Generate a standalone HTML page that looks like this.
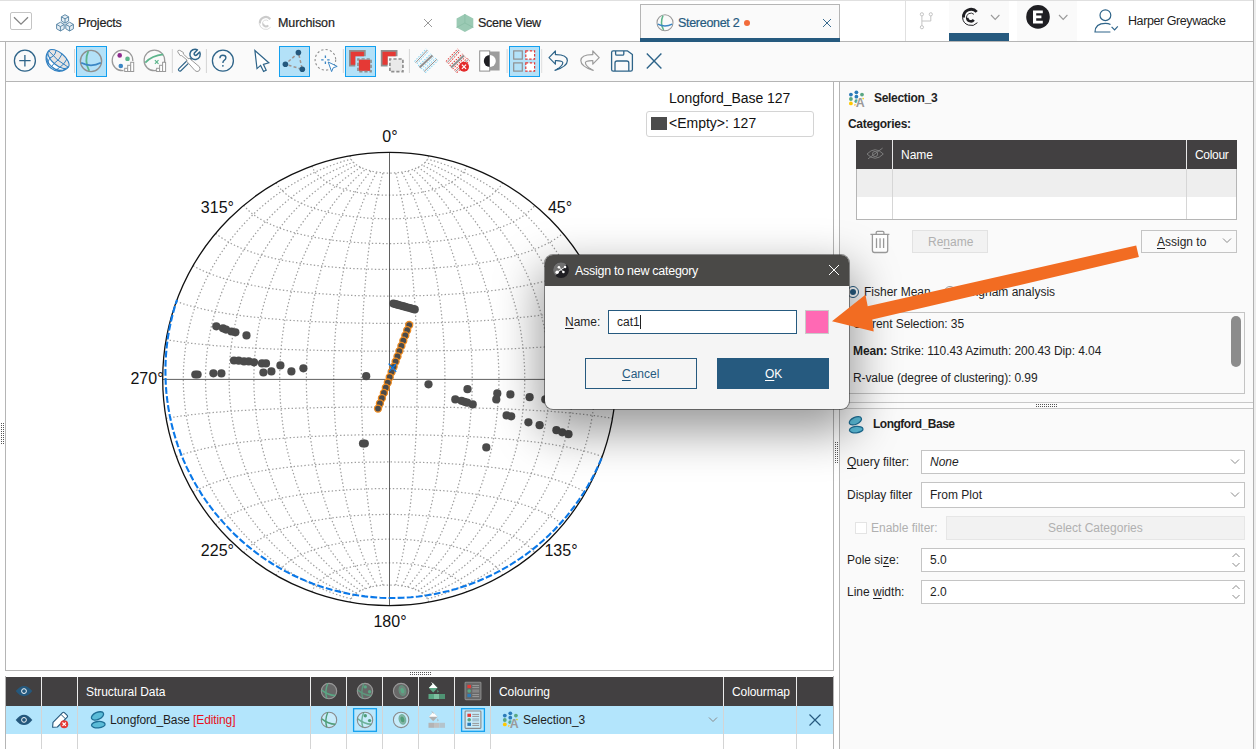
<!DOCTYPE html><html><head><meta charset='utf-8'><title>Stereonet</title><style>
*{box-sizing:border-box;margin:0;padding:0}
html,body{width:1256px;height:749px;overflow:hidden;background:#fff}
body{position:relative;font-family:"Liberation Sans",sans-serif;font-size:12px;color:#1f1f1f}
.a{position:absolute}
.t{position:absolute;white-space:pre;line-height:16px;height:16px}
.m{-webkit-text-stroke:0.22px currentColor}
.b{font-weight:bold}
svg{position:absolute;overflow:visible}
u{text-decoration:underline;text-underline-offset:2px}
</style></head><body>
<div class='a' style='left:0;top:0;width:1256px;height:1px;background:#e0e0e0'></div>
<div class='a' style='left:0;top:41px;width:1256px;height:1px;background:#b5b5b5'></div>
<div class='a' style='left:10px;top:12px;width:22px;height:18px;border:1px solid #c4c4c4;border-radius:2px;background:#fff'></div>
<svg style='left:10px;top:12px' width='22' height='18'><path d='M4 5.2 L11 12.2 L18 5.2' fill='none' stroke='#848484' stroke-width='1.3'/></svg>
<div class='t m' style='left:78px;top:15px;font-size:12.5px;letter-spacing:-0.2px'>Projects</div>
<div class='t m' style='left:278px;top:15px;font-size:12.5px;letter-spacing:-0.1px'>Murchison</div>
<div class='t m' style='left:478px;top:15px;font-size:12.5px;letter-spacing:-0.3px'>Scene View</div>
<div class='a' style='left:640px;top:4px;width:200px;height:38px;border:1px solid #b5b5b5;border-bottom:none;background:#fafafa'></div>
<div class='a' style='left:640px;top:38px;width:200px;height:4px;background:#265a7f'></div>
<div class='t m' style='left:678px;top:15px;font-size:12.5px;letter-spacing:-0.3px;color:#265a7f'>Stereonet 2</div>
<div class='a' style='left:744px;top:20px;width:6px;height:6px;border-radius:3px;background:#f26b3a'></div>
<svg style='left:423px;top:18px' width='10' height='10'><path d='M1 1 L9 9 M9 1 L1 9' stroke='#9a9a9a' stroke-width='1'/></svg>
<svg style='left:822px;top:18px' width='10' height='10'><path d='M1 1 L9 9 M9 1 L1 9' stroke='#3a6c90' stroke-width='1'/></svg>
<div class='a' style='left:905px;top:1px;width:1px;height:40px;background:#e0e0e0'></div>
<div class='a' style='left:949px;top:1px;width:60px;height:32px;background:#fafafa'></div>
<div class='a' style='left:949px;top:33px;width:60px;height:8px;background:#265a7f'></div>
<div class='a' style='left:1017px;top:1px;width:60px;height:40px;background:#fafafa'></div>
<div class='t' style='left:1128px;top:13px;font-size:12.5px;letter-spacing:-0.42px'>Harper Greywacke</div>
<div class='a' style='left:5px;top:42px;width:1251px;height:40px;border-left:1px solid #b5b5b5;border-bottom:1px solid #b5b5b5;background:#fafafa'></div>
<svg style='left:0;top:0' width='1256' height='749' viewBox='0 0 1256 749'><path d='M65.0 14.7 L68.6 16.8 L68.6 21.0 L65.0 23.1 L61.4 21.0 L61.4 16.8Z M65.0 18.9 L68.6 16.8 M65.0 18.9 L61.4 16.8 M65.0 18.9 L65.0 23.1' fill='#e6eef4' stroke='#4f7fa0' stroke-width='0.9' stroke-linejoin='round'/><path d='M60.4 22.2 L64.2 24.4 L64.2 28.8 L60.4 31.0 L56.6 28.8 L56.6 24.4Z M60.4 26.6 L64.2 24.4 M60.4 26.6 L56.6 24.4 M60.4 26.6 L60.4 31.0' fill='#e6eef4' stroke='#4f7fa0' stroke-width='0.9' stroke-linejoin='round'/><path d='M69.6 22.2 L73.4 24.4 L73.4 28.8 L69.6 31.0 L65.8 28.8 L65.8 24.4Z M69.6 26.6 L73.4 24.4 M69.6 26.6 L65.8 24.4 M69.6 26.6 L69.6 31.0' fill='#e6eef4' stroke='#4f7fa0' stroke-width='0.9' stroke-linejoin='round'/><path d='M270.3 19.2 A5.9 5.9 0 0 0 259.9 23.5' fill='none' stroke='#cbcbcb' stroke-width='2.2'/><path d='M259.3 23.6 A6.5 6.5 0 0 0 270.6 27.3' fill='none' stroke='#d2d2d2' stroke-width='0.8'/><path d='M268.2 20.9 A3.5 3.5 0 0 0 262.4 23.8' fill='none' stroke='#d2d2d2' stroke-width='0.8'/><path d='M263.0 23.6 A2.9 2.9 0 0 0 268.2 25.3' fill='none' stroke='#cbcbcb' stroke-width='2'/><path d='M464.9 14 L473.3 18.6 L473.3 27.4 L464.9 32 L456.6 27.4 L456.6 18.6 Z' fill='#9bcab4'/><path d='M464.9 14 V23 L473.3 27.4 M464.9 23 L456.6 27.4' fill='none' stroke='#8cc0a8' stroke-width='1'/><circle cx='665' cy='22.8' r='8' fill='none' stroke='#9a9a9a' stroke-width='1.1'/><path d='M663.0 15.6 Q659.7 22.8 663.6 30.0' fill='none' stroke='#5db58c' stroke-width='1.5'/><path d='M657.8 24.2 Q665.0 27.9 672.2 24.2' fill='none' stroke='#3b86c4' stroke-width='1.5'/><g fill='#fff' stroke='#c4c4c4' stroke-width='1'><path d='M921.9 15.5 V26 M930.8 15.5 V21 H921.9' fill='none'/><circle cx='921.9' cy='14.3' r='1.6'/><circle cx='930.8' cy='14.3' r='1.6'/><circle cx='921.9' cy='27.2' r='1.6'/></g><path d='M976.7 11.9 A7.6 7.6 0 0 0 963.5 17.7' fill='none' stroke='#1f1f23' stroke-width='2.9'/><path d='M962.6 17.7 A8.5 8.5 0 0 0 977.4 22.7' fill='none' stroke='#1f1f23' stroke-width='1'/><path d='M973.9 14.3 A4.5 4.5 0 0 0 966.4 18.0' fill='none' stroke='#1f1f23' stroke-width='0.9'/><path d='M967.2 17.7 A3.7 3.7 0 0 0 973.8 19.9' fill='none' stroke='#1f1f23' stroke-width='2.6'/><path d='M991 15 L995.2 19.4 L999.4 15' fill='none' stroke='#9a9a9a' stroke-width='1.1'/><circle cx='1038' cy='16.9' r='11.8' fill='#1f1f23'/><path d='M1033 10.4 H1042.8 V13.2 H1036.2 V15.6 H1041.4 V18.3 H1036.2 V20.8 H1042.8 V23.6 H1033 Z' fill='#fff'/><path d='M1059 15 L1063.2 19.4 L1067.4 15' fill='none' stroke='#9a9a9a' stroke-width='1.1'/><g fill='none' stroke='#2e6489' stroke-width='1.2'><circle cx='1105.4' cy='15.2' r='5.4'/><path d='M1110.5 24.6 Q1108.5 23.4 1105.4 23.4 Q1095.2 23.4 1095 32 H1110.4 M1111.6 26.8 L1114.6 29.8 L1117.8 26.4'/></g><g fill='none' stroke='#2e6489' stroke-width='1.3'><circle cx='24.9' cy='60.7' r='10.5'/><path d='M24.9 55 V66.4 M19.2 60.7 H30.6'/></g><g transform='translate(58.5 59) rotate(40)'><path d='M-12.8 0 A12.8 12 0 0 0 12.8 0' fill='#fff' stroke='#2f7fc1' stroke-width='1.1'/><ellipse cx='0' cy='0' rx='12.8' ry='6.2' fill='#e8e4e2' stroke='#2f7fc1' stroke-width='1.1'/><g fill='none' stroke='#2f7fc1' stroke-width='0.9'><path d='M-12.8 0 Q0 2.6 12.8 0'/><path d='M-7.4 -5 Q-4.4 0 -7.4 5 M-0.5 -6.2 Q1.5 0 -0.5 6.2 M6.4 -5.4 Q8 0 6.4 5.4'/><path d='M-11.8 3.4 A12.2 9 0 0 0 11.8 3.4 M-9.8 7 A10.6 6 0 0 0 9.8 7 M-7.4 5 Q-6.6 8.6 -4.6 11 M-0.5 6.2 V12 M6.4 5.4 Q5.8 9 4.2 11.2'/></g></g><path d='M74.5 49 V73' stroke='#d4d4d4' stroke-width='1'/><rect x='76.5' y='46.5' width='30' height='30' fill='#b3e1f8' stroke='#12a0f0' stroke-width='1'/><circle cx='91' cy='61' r='10.6' fill='none' stroke='#8f8f8f' stroke-width='1.4'/><path d='M88.3 51.2 Q84.0 61.0 89.2 70.8' fill='none' stroke='#5db58c' stroke-width='1.7999999999999998'/><path d='M81.2 62.8 Q91.0 67.8 100.8 62.8' fill='none' stroke='#3b86c4' stroke-width='1.7999999999999998'/><circle cx='122.5' cy='60.4' r='10.3' fill='none' stroke='#9a9a9a' stroke-width='1.3'/><circle cx='119.7' cy='55.4' r='2.3' fill='#8e2a8e'/><circle cx='127.5' cy='58.9' r='2.3' fill='#5db58c'/><circle cx='120.8' cy='66' r='2.3' fill='#3b86c4'/><rect x='123.5' y='61' width='12' height='12' fill='#fafafa'/><rect x='124.7' y='68.3' width='3' height='3.2' fill='#fff' stroke='#9a9a9a' stroke-width='1'/><rect x='127.7' y='65.3' width='3' height='6.2' fill='#fff' stroke='#9a9a9a' stroke-width='1'/><rect x='130.7' y='62.3' width='3' height='9.2' fill='#fff' stroke='#9a9a9a' stroke-width='1'/><circle cx='154.4' cy='60.4' r='10.3' fill='none' stroke='#9a9a9a' stroke-width='1.3'/><path d='M145.3 62.6 Q152 55.5 163.2 54.4' fill='none' stroke='#5db58c' stroke-width='1.7'/><path d='M154.9 60.2 L158.5 63.8 M158.5 60.2 L154.9 63.8' stroke='#5db58c' stroke-width='1.2'/><rect x='155.5' y='61.5' width='12' height='12' fill='#fafafa' opacity='0'/><rect x='156' y='65' width='11' height='8' fill='#fafafa'/><rect x='156.6' y='68.3' width='3' height='3.2' fill='#fff' stroke='#9a9a9a' stroke-width='1'/><rect x='159.6' y='65.3' width='3' height='6.2' fill='#fff' stroke='#9a9a9a' stroke-width='1'/><rect x='162.6' y='62.3' width='3' height='9.2' fill='#fff' stroke='#9a9a9a' stroke-width='1'/><path d='M172.3 49 V73' stroke='#d4d4d4' stroke-width='1'/><path d='M179.9 69.7 L190 59.8' stroke='#2e6489' stroke-width='4' stroke-linecap='round'/><path d='M179.9 69.7 L190 59.8' stroke='#fafafa' stroke-width='1.7' stroke-linecap='round'/><path d='M197.5 49.8 L194.6 52.7 A1.55 1.55 0 0 0 196.8 54.9 L199.7 52 A5.2 5.2 0 1 1 197.5 49.8 Z' fill='#fafafa' stroke='#2e6489' stroke-width='1.5' stroke-linejoin='round'/><path d='M177.7 51.8 Q177.5 49.9 179.7 50.3 L183.4 52.5 L183.3 54 L188.2 58.6 L189.6 58.5 L199.3 66.7 Q201 69 199 70.9 Q197 72.4 195 70.6 L186.8 61.4 L187 60 L181.7 55.6 L180.2 55.6 Z' fill='#fff' stroke='#9a9a9a' stroke-width='1' stroke-linejoin='round'/><path d='M206.4 49 V73' stroke='#d4d4d4' stroke-width='1'/><circle cx='222.9' cy='60.7' r='10.5' fill='none' stroke='#2e6489' stroke-width='1.3'/><path d='M219.9 58.2 Q219.9 55.2 222.9 55.2 Q225.9 55.2 225.9 57.8 Q225.9 59.4 224.2 60.4 Q222.9 61.2 222.9 63' fill='none' stroke='#2e6489' stroke-width='1.4'/><circle cx='222.9' cy='65.8' r='0.9' fill='#2e6489'/><path d='M254.9 50.6 L257 68.6 L260.6 65.4 L263.6 71.4 L266.2 70.2 L263.4 64.3 L268.8 62.8 Z' fill='#fff' stroke='#2e6489' stroke-width='1.2' stroke-linejoin='miter'/><rect x='279.5' y='46.5' width='30' height='30' fill='#b3e1f8' stroke='#12a0f0' stroke-width='1'/><path d='M298.4 52.6 L285.4 64.3 L302.3 69.3 Z' fill='none' stroke='#a0948f' stroke-width='1.5' stroke-dasharray='3 2.2'/><g fill='#24587d'><circle cx='298.4' cy='52.6' r='2.8'/><circle cx='285.4' cy='64.3' r='2.8'/><circle cx='302.3' cy='69.3' r='2.8'/></g><circle cx='325.4' cy='59.8' r='10.3' fill='none' stroke='#8f8f8f' stroke-width='1.1' stroke-dasharray='2.2 2.2'/><path d='M325.4 55.6 V58 M325.4 61.6 V64 M321.2 59.8 H323.6 M327.2 59.8 H329.6' stroke='#3b86c4' stroke-width='1.3'/><path d='M328.2 62 L337.2 66.4 L333.2 67.8 L331.6 71.6 Z' fill='#fff' stroke='#3b86c4' stroke-width='1' stroke-linejoin='round'/><path d='M343.3 49 V73' stroke='#d4d4d4' stroke-width='1'/><rect x='345.5' y='46.5' width='30' height='30' fill='#b3e1f8' stroke='#12a0f0' stroke-width='1'/><path d='M349 50 H365.7 V56.3 H355.3 V66.4 H349 Z' fill='#8f8f8f'/><path d='M350.7 51.7 H363.9 V56.3 H355.3 V64.7 H350.7 Z' fill='#e53935'/><rect x='358.8' y='59.5' width='11.4' height='11.4' fill='#e53935'/><rect x='358' y='59' width='13' height='12.6' fill='none' stroke='#8f8f8f' stroke-width='1.7' stroke-dasharray='3.2 1.9' stroke-dashoffset='1.6'/><path d='M380.8 50 H397.5 V56.3 H387.6 V66.4 H380.8 Z' fill='#8f8f8f'/><path d='M382.5 51.7 H395.7 V56.3 H387.6 V64.7 H382.5 Z' fill='#e53935'/><rect x='390' y='59.4' width='12.6' height='12' fill='#e9e9e9'/><rect x='389.9' y='59' width='13' height='12.6' fill='none' stroke='#8f8f8f' stroke-width='1.7' stroke-dasharray='3.2 1.9' stroke-dashoffset='1.6'/><path d='M409.4 49 V73' stroke='#d4d4d4' stroke-width='1'/><path d='M415.7 62.6 L427.4 50.0' stroke='#7fd3f3' stroke-width='4.2' stroke-dasharray='1.6 1.2' /><path d='M415.7 62.6 L427.4 50.0' stroke='#fafafa' stroke-width='2.4'/><path d='M415.7 62.6 L427.4 50.0' stroke='#8f8f8f' stroke-width='1.0'/><path d='M419.6 67.4 L432.4 55.4' stroke='#7fd3f3' stroke-width='5.2' stroke-dasharray='1.6 1.2' /><path d='M419.6 67.4 L432.4 55.4' stroke='#fafafa' stroke-width='3.4'/><path d='M419.6 67.4 L432.4 55.4' stroke='#8f8f8f' stroke-width='2.0'/><path d='M424.1 71.5 L436.9 59.3' stroke='#7fd3f3' stroke-width='4.2' stroke-dasharray='1.6 1.2' /><path d='M424.1 71.5 L436.9 59.3' stroke='#fafafa' stroke-width='2.4'/><path d='M424.1 71.5 L436.9 59.3' stroke='#8f8f8f' stroke-width='1.0'/><path d='M447.2 62.6 L458.9 50.0' stroke='#e53935' stroke-width='4.2' stroke-dasharray='1.6 1.2' /><path d='M447.2 62.6 L458.9 50.0' stroke='#fafafa' stroke-width='2.4'/><path d='M447.2 62.6 L458.9 50.0' stroke='#8f8f8f' stroke-width='1.0'/><path d='M451.1 67.4 L463.9 55.4' stroke='#e53935' stroke-width='5.2' stroke-dasharray='1.6 1.2' /><path d='M451.1 67.4 L463.9 55.4' stroke='#fafafa' stroke-width='3.4'/><path d='M451.1 67.4 L463.9 55.4' stroke='#8f8f8f' stroke-width='2.0'/><path d='M455.6 71.5 L468.4 59.3' stroke='#e53935' stroke-width='4.2' stroke-dasharray='1.6 1.2' /><path d='M455.6 71.5 L468.4 59.3' stroke='#fafafa' stroke-width='2.4'/><path d='M455.6 71.5 L468.4 59.3' stroke='#8f8f8f' stroke-width='1.0'/><circle cx='464' cy='66.8' r='5' fill='#e32b2b'/><path d='M461.9 64.7 L466.1 68.9 M466.1 64.7 L461.9 68.9' stroke='#fff' stroke-width='1.2'/><rect x='479.7' y='50.9' width='10' height='20.2' fill='#fff' stroke='#8f8f8f' stroke-width='1'/><rect x='489.8' y='51.5' width='9.8' height='19' fill='#9c9c9c'/><path d='M489.8 55 A6 6 0 0 0 489.8 67 Z' fill='#1f1f23'/><path d='M489.8 55 A6 6 0 0 1 489.8 67 Z' fill='#fff'/><path d='M507.1 49 V73' stroke='#d4d4d4' stroke-width='1'/><rect x='509.5' y='46.5' width='30' height='30' fill='#b3e1f8' stroke='#12a0f0' stroke-width='1'/><g fill='none' stroke='#8f8f8f' stroke-width='1.2'><rect x='513.7' y='50.9' width='8.6' height='8.2'/><rect x='513.7' y='62.9' width='8.6' height='8.2'/></g><g fill='#fff' stroke='#e53935' stroke-width='1.2' stroke-dasharray='2.4 1.6'><rect x='525.8' y='50.9' width='8.8' height='8.2'/><rect x='525.8' y='62.9' width='8.8' height='8.2'/></g><path d='M541.7 49 V73' stroke='#dedede' stroke-width='1'/><g transform='translate(558.4 0)'><path d='M-9.4 57.6 L-3 51 L-3 54.6 Q8.6 54.4 9 60.6 Q9 66.6 -3.4 70.4 Q4.6 66 4.4 62.6 Q4 60.4 -3 60.6 L-3 64.2 Z' fill='none' stroke='#2e6489' stroke-width='1.2' stroke-linejoin='round'/></g><g transform='translate(589.8 0) scale(-1 1)'><path d='M-9.4 57.6 L-3 51 L-3 54.6 Q8.6 54.4 9 60.6 Q9 66.6 -3.4 70.4 Q4.6 66 4.4 62.6 Q4 60.4 -3 60.6 L-3 64.2 Z' fill='none' stroke='#9c9c9c' stroke-width='1.2' stroke-linejoin='round'/></g><g fill='none' stroke='#2e6489' stroke-width='1.3' stroke-linejoin='round'><path d='M613.2 50.9 H627.6 L632.4 54.6 V69.4 Q632.4 71.1 630.6 71.1 H613.2 Q611.6 71.1 611.6 69.4 V52.6 Q611.6 50.9 613.2 50.9 Z'/><path d='M615.6 50.9 V54 Q615.6 55.2 616.8 55.2 H622.6 Q623.8 55.2 623.8 54 V50.9'/><path d='M615 71.1 V63 Q615 61 617 61 H626.8 Q628.8 61 628.8 63 V71.1'/></g><path d='M646.8 53.6 L661.4 68.4 M661.4 53.6 L646.8 68.4' stroke='#2e6489' stroke-width='1.4'/></svg>
<div class='a' style='left:5px;top:81px;width:829px;height:590px;border:1px solid #b5b5b5;background:#fff'></div>
<svg style='left:0;top:0' width='1256' height='749' viewBox='0 0 1256 749'><g fill='none' stroke='#9e9e9e' stroke-width='1.25' stroke-dasharray='1.4 2.2' stroke-linecap='butt'><path d='M351.1 598.9 L343.7 596.8 L336.4 594.4 L329.2 591.8 L322.1 589.0 L315.1 585.9 L308.3 582.6 L301.6 579.1 L295.0 575.3 L288.6 571.4 L282.3 567.2 L276.1 562.9 L270.2 558.4 L264.4 553.6 L258.7 548.7 L253.2 543.6 L248.0 538.4 L242.9 533.0 L237.9 527.4 L233.2 521.7 L228.7 515.8 L224.4 509.8 L220.2 503.7 L216.3 497.5 L212.6 491.1 L209.1 484.6 L205.8 478.1 L202.8 471.4 L199.9 464.6 L197.3 457.8 L194.9 450.9 L192.7 443.9 L190.7 436.8 L189.0 429.7 L187.5 422.6 L186.2 415.4 L185.2 408.1 L184.4 400.9 L183.8 393.6 L183.4 386.3 L183.3 379.0 L183.4 371.7 L183.8 364.4 L184.4 357.1 L185.2 349.9 L186.2 342.6 L187.5 335.4 L189.0 328.3 L190.7 321.2 L192.7 314.1 L194.9 307.1 L197.3 300.2 L199.9 293.4 L202.8 286.6 L205.8 279.9 L209.1 273.4 L212.6 266.9 L216.3 260.5 L220.2 254.3 L224.4 248.2 L228.7 242.2 L233.2 236.3 L237.9 230.6 L242.9 225.0 L248.0 219.6 L253.2 214.4 L258.7 209.3 L264.4 204.4 L270.2 199.6 L276.1 195.1 L282.3 190.8 L288.6 186.6 L295.0 182.7 L301.6 178.9 L308.3 175.4 L315.1 172.1 L322.1 169.0 L329.2 166.2 L336.4 163.6 L343.7 161.2 L351.1 159.1'/><path d='M353.4 595.8 L346.5 593.2 L339.8 590.3 L333.2 587.2 L326.7 584.0 L320.4 580.5 L314.2 576.8 L308.2 573.0 L302.3 568.9 L296.5 564.7 L290.9 560.3 L285.5 555.8 L280.2 551.1 L275.1 546.3 L270.2 541.3 L265.4 536.2 L260.8 530.9 L256.3 525.5 L252.1 520.0 L248.0 514.4 L244.1 508.7 L240.4 502.8 L236.8 496.9 L233.5 490.8 L230.3 484.7 L227.3 478.5 L224.5 472.2 L221.9 465.9 L219.5 459.5 L217.3 453.0 L215.2 446.4 L213.4 439.8 L211.7 433.2 L210.3 426.5 L209.0 419.8 L207.9 413.0 L207.1 406.3 L206.4 399.5 L205.9 392.6 L205.6 385.8 L205.5 379.0 L205.6 372.2 L205.9 365.4 L206.4 358.5 L207.1 351.7 L207.9 345.0 L209.0 338.2 L210.3 331.5 L211.7 324.8 L213.4 318.2 L215.2 311.6 L217.3 305.0 L219.5 298.5 L221.9 292.1 L224.5 285.8 L227.3 279.5 L230.3 273.3 L233.5 267.2 L236.8 261.1 L240.4 255.2 L244.1 249.3 L248.0 243.6 L252.1 238.0 L256.3 232.5 L260.8 227.1 L265.4 221.8 L270.2 216.7 L275.1 211.7 L280.2 206.9 L285.5 202.2 L290.9 197.7 L296.5 193.3 L302.3 189.1 L308.2 185.0 L314.2 181.2 L320.4 177.5 L326.7 174.0 L333.2 170.8 L339.8 167.7 L346.5 164.8 L353.4 162.2'/><path d='M356.6 593.1 L350.5 590.0 L344.5 586.7 L338.6 583.2 L332.9 579.6 L327.3 575.8 L321.8 571.8 L316.5 567.7 L311.4 563.5 L306.4 559.1 L301.5 554.5 L296.8 549.9 L292.3 545.1 L287.9 540.2 L283.7 535.1 L279.6 530.0 L275.6 524.8 L271.9 519.4 L268.2 514.0 L264.8 508.5 L261.5 502.9 L258.3 497.2 L255.3 491.4 L252.5 485.5 L249.8 479.6 L247.3 473.6 L245.0 467.6 L242.8 461.5 L240.8 455.4 L238.9 449.2 L237.2 442.9 L235.7 436.6 L234.3 430.3 L233.1 424.0 L232.0 417.6 L231.1 411.2 L230.4 404.8 L229.8 398.4 L229.4 391.9 L229.2 385.5 L229.1 379.0 L229.2 372.5 L229.4 366.1 L229.8 359.6 L230.4 353.2 L231.1 346.8 L232.0 340.4 L233.1 334.0 L234.3 327.7 L235.7 321.4 L237.2 315.1 L238.9 308.8 L240.8 302.6 L242.8 296.5 L245.0 290.4 L247.3 284.4 L249.8 278.4 L252.5 272.5 L255.3 266.6 L258.3 260.8 L261.5 255.1 L264.8 249.5 L268.2 244.0 L271.9 238.6 L275.6 233.2 L279.6 228.0 L283.7 222.9 L287.9 217.8 L292.3 212.9 L296.8 208.1 L301.5 203.5 L306.4 198.9 L311.4 194.5 L316.5 190.3 L321.8 186.2 L327.3 182.2 L332.9 178.4 L338.6 174.8 L344.5 171.3 L350.5 168.0 L356.6 164.9'/><path d='M360.7 590.7 L355.4 587.2 L350.2 583.5 L345.2 579.8 L340.3 575.8 L335.5 571.8 L330.9 567.6 L326.4 563.3 L322.1 558.9 L317.9 554.4 L313.8 549.7 L309.9 545.0 L306.0 540.1 L302.4 535.2 L298.8 530.1 L295.4 525.0 L292.2 519.8 L289.0 514.5 L286.0 509.2 L283.2 503.7 L280.5 498.2 L277.9 492.7 L275.4 487.0 L273.1 481.3 L270.9 475.6 L268.8 469.8 L266.9 464.0 L265.1 458.1 L263.4 452.2 L261.9 446.2 L260.5 440.2 L259.2 434.2 L258.1 428.1 L257.1 422.0 L256.3 415.9 L255.5 409.8 L254.9 403.7 L254.5 397.5 L254.1 391.3 L253.9 385.2 L253.9 379.0 L253.9 372.8 L254.1 366.7 L254.5 360.5 L254.9 354.3 L255.5 348.2 L256.3 342.1 L257.1 336.0 L258.1 329.9 L259.2 323.8 L260.5 317.8 L261.9 311.8 L263.4 305.8 L265.1 299.9 L266.9 294.0 L268.8 288.2 L270.9 282.4 L273.1 276.7 L275.4 271.0 L277.9 265.3 L280.5 259.8 L283.2 254.3 L286.0 248.8 L289.0 243.5 L292.2 238.2 L295.4 233.0 L298.8 227.9 L302.4 222.8 L306.0 217.9 L309.9 213.0 L313.8 208.3 L317.9 203.6 L322.1 199.1 L326.4 194.7 L330.9 190.4 L335.5 186.2 L340.3 182.2 L345.2 178.2 L350.2 174.5 L355.4 170.8 L360.7 167.3'/><path d='M365.5 588.6 L361.2 584.9 L356.9 581.0 L352.8 576.9 L348.8 572.8 L345.0 568.5 L341.2 564.2 L337.6 559.8 L334.1 555.2 L330.7 550.6 L327.4 545.9 L324.2 541.1 L321.1 536.2 L318.2 531.2 L315.4 526.2 L312.7 521.1 L310.1 515.9 L307.6 510.7 L305.2 505.4 L302.9 500.0 L300.7 494.6 L298.7 489.2 L296.7 483.7 L294.9 478.1 L293.1 472.5 L291.5 466.8 L290.0 461.2 L288.6 455.4 L287.2 449.7 L286.0 443.9 L284.9 438.1 L283.9 432.3 L283.0 426.4 L282.3 420.5 L281.6 414.6 L281.0 408.7 L280.5 402.8 L280.2 396.8 L279.9 390.9 L279.7 385.0 L279.7 379.0 L279.7 373.0 L279.9 367.1 L280.2 361.2 L280.5 355.2 L281.0 349.3 L281.6 343.4 L282.3 337.5 L283.0 331.6 L283.9 325.7 L284.9 319.9 L286.0 314.1 L287.2 308.3 L288.6 302.6 L290.0 296.8 L291.5 291.2 L293.1 285.5 L294.9 279.9 L296.7 274.3 L298.7 268.8 L300.7 263.4 L302.9 258.0 L305.2 252.6 L307.6 247.3 L310.1 242.1 L312.7 236.9 L315.4 231.8 L318.2 226.8 L321.1 221.8 L324.2 216.9 L327.4 212.1 L330.7 207.4 L334.1 202.8 L337.6 198.2 L341.2 193.8 L345.0 189.5 L348.8 185.2 L352.8 181.1 L356.9 177.0 L361.2 173.1 L365.5 169.4'/><path d='M371.0 587.1 L367.6 583.0 L364.4 578.9 L361.2 574.7 L358.2 570.4 L355.3 566.0 L352.4 561.6 L349.7 557.0 L347.0 552.4 L344.5 547.7 L342.0 542.9 L339.6 538.1 L337.3 533.2 L335.1 528.2 L333.0 523.2 L330.9 518.1 L329.0 513.0 L327.1 507.8 L325.3 502.6 L323.6 497.3 L322.0 491.9 L320.5 486.6 L319.0 481.1 L317.6 475.7 L316.3 470.2 L315.1 464.6 L314.0 459.1 L312.9 453.5 L312.0 447.9 L311.1 442.2 L310.2 436.5 L309.5 430.9 L308.8 425.1 L308.3 419.4 L307.8 413.7 L307.3 407.9 L307.0 402.1 L306.7 396.4 L306.5 390.6 L306.4 384.8 L306.4 379.0 L306.4 373.2 L306.5 367.4 L306.7 361.6 L307.0 355.9 L307.3 350.1 L307.8 344.3 L308.3 338.6 L308.8 332.9 L309.5 327.1 L310.2 321.5 L311.1 315.8 L312.0 310.1 L312.9 304.5 L314.0 298.9 L315.1 293.4 L316.3 287.8 L317.6 282.3 L319.0 276.9 L320.5 271.4 L322.0 266.1 L323.6 260.7 L325.3 255.4 L327.1 250.2 L329.0 245.0 L330.9 239.9 L333.0 234.8 L335.1 229.8 L337.3 224.8 L339.6 219.9 L342.0 215.1 L344.5 210.3 L347.0 205.6 L349.7 201.0 L352.4 196.4 L355.3 192.0 L358.2 187.6 L361.2 183.3 L364.4 179.1 L367.6 175.0 L371.0 170.9'/><path d='M376.8 585.9 L374.6 581.7 L372.4 577.5 L370.3 573.1 L368.2 568.7 L366.2 564.2 L364.3 559.7 L362.5 555.1 L360.7 550.4 L359.0 545.7 L357.3 540.9 L355.7 536.0 L354.2 531.1 L352.7 526.1 L351.3 521.1 L350.0 516.1 L348.7 510.9 L347.4 505.8 L346.2 500.6 L345.1 495.3 L344.0 490.1 L343.0 484.7 L342.0 479.4 L341.1 474.0 L340.3 468.6 L339.5 463.1 L338.7 457.6 L338.0 452.1 L337.4 446.6 L336.8 441.1 L336.2 435.5 L335.7 429.9 L335.3 424.3 L334.9 418.6 L334.6 413.0 L334.3 407.4 L334.1 401.7 L333.9 396.0 L333.8 390.4 L333.7 384.7 L333.7 379.0 L333.7 373.3 L333.8 367.6 L333.9 362.0 L334.1 356.3 L334.3 350.6 L334.6 345.0 L334.9 339.4 L335.3 333.7 L335.7 328.1 L336.2 322.5 L336.8 316.9 L337.4 311.4 L338.0 305.9 L338.7 300.4 L339.5 294.9 L340.3 289.4 L341.1 284.0 L342.0 278.6 L343.0 273.3 L344.0 267.9 L345.1 262.7 L346.2 257.4 L347.4 252.2 L348.7 247.1 L350.0 241.9 L351.3 236.9 L352.7 231.9 L354.2 226.9 L355.7 222.0 L357.3 217.1 L359.0 212.3 L360.7 207.6 L362.5 202.9 L364.3 198.3 L366.2 193.8 L368.2 189.3 L370.3 184.9 L372.4 180.5 L374.6 176.3 L376.8 172.1'/><path d='M383.0 585.2 L381.8 580.9 L380.7 576.6 L379.7 572.2 L378.7 567.7 L377.7 563.2 L376.7 558.6 L375.8 553.9 L374.9 549.2 L374.0 544.5 L373.2 539.6 L372.4 534.8 L371.6 529.9 L370.9 524.9 L370.2 519.9 L369.5 514.8 L368.9 509.7 L368.2 504.6 L367.6 499.4 L367.1 494.2 L366.5 489.0 L366.0 483.7 L365.6 478.4 L365.1 473.0 L364.7 467.6 L364.3 462.2 L363.9 456.8 L363.5 451.3 L363.2 445.9 L362.9 440.4 L362.7 434.9 L362.4 429.3 L362.2 423.8 L362.0 418.2 L361.8 412.6 L361.7 407.0 L361.6 401.4 L361.5 395.8 L361.4 390.2 L361.4 384.6 L361.4 379.0 L361.4 373.4 L361.4 367.8 L361.5 362.2 L361.6 356.6 L361.7 351.0 L361.8 345.4 L362.0 339.8 L362.2 334.2 L362.4 328.7 L362.7 323.1 L362.9 317.6 L363.2 312.1 L363.5 306.7 L363.9 301.2 L364.3 295.8 L364.7 290.4 L365.1 285.0 L365.6 279.6 L366.0 274.3 L366.5 269.0 L367.1 263.8 L367.6 258.6 L368.2 253.4 L368.9 248.3 L369.5 243.2 L370.2 238.1 L370.9 233.1 L371.6 228.1 L372.4 223.2 L373.2 218.4 L374.0 213.5 L374.9 208.8 L375.8 204.1 L376.7 199.4 L377.7 194.8 L378.7 190.3 L379.7 185.8 L380.7 181.4 L381.8 177.1 L383.0 172.8'/><path d='M395.6 585.2 L396.8 580.9 L397.9 576.6 L398.9 572.2 L399.9 567.7 L400.9 563.2 L401.9 558.6 L402.8 553.9 L403.7 549.2 L404.6 544.5 L405.4 539.6 L406.2 534.8 L407.0 529.9 L407.7 524.9 L408.4 519.9 L409.1 514.8 L409.7 509.7 L410.4 504.6 L411.0 499.4 L411.5 494.2 L412.1 489.0 L412.6 483.7 L413.0 478.4 L413.5 473.0 L413.9 467.6 L414.3 462.2 L414.7 456.8 L415.1 451.3 L415.4 445.9 L415.7 440.4 L415.9 434.9 L416.2 429.3 L416.4 423.8 L416.6 418.2 L416.8 412.6 L416.9 407.0 L417.0 401.4 L417.1 395.8 L417.2 390.2 L417.2 384.6 L417.2 379.0 L417.2 373.4 L417.2 367.8 L417.1 362.2 L417.0 356.6 L416.9 351.0 L416.8 345.4 L416.6 339.8 L416.4 334.2 L416.2 328.7 L415.9 323.1 L415.7 317.6 L415.4 312.1 L415.1 306.7 L414.7 301.2 L414.3 295.8 L413.9 290.4 L413.5 285.0 L413.0 279.6 L412.6 274.3 L412.1 269.0 L411.5 263.8 L411.0 258.6 L410.4 253.4 L409.7 248.3 L409.1 243.2 L408.4 238.1 L407.7 233.1 L407.0 228.1 L406.2 223.2 L405.4 218.4 L404.6 213.5 L403.7 208.8 L402.8 204.1 L401.9 199.4 L400.9 194.8 L399.9 190.3 L398.9 185.8 L397.9 181.4 L396.8 177.1 L395.6 172.8'/><path d='M401.8 585.9 L404.0 581.7 L406.2 577.5 L408.3 573.1 L410.4 568.7 L412.4 564.2 L414.3 559.7 L416.1 555.1 L417.9 550.4 L419.6 545.7 L421.3 540.9 L422.9 536.0 L424.4 531.1 L425.9 526.1 L427.3 521.1 L428.6 516.1 L429.9 510.9 L431.2 505.8 L432.4 500.6 L433.5 495.3 L434.6 490.1 L435.6 484.7 L436.6 479.4 L437.5 474.0 L438.3 468.6 L439.1 463.1 L439.9 457.6 L440.6 452.1 L441.2 446.6 L441.8 441.1 L442.4 435.5 L442.9 429.9 L443.3 424.3 L443.7 418.6 L444.0 413.0 L444.3 407.4 L444.5 401.7 L444.7 396.0 L444.8 390.4 L444.9 384.7 L444.9 379.0 L444.9 373.3 L444.8 367.6 L444.7 362.0 L444.5 356.3 L444.3 350.6 L444.0 345.0 L443.7 339.4 L443.3 333.7 L442.9 328.1 L442.4 322.5 L441.8 316.9 L441.2 311.4 L440.6 305.9 L439.9 300.4 L439.1 294.9 L438.3 289.4 L437.5 284.0 L436.6 278.6 L435.6 273.3 L434.6 267.9 L433.5 262.7 L432.4 257.4 L431.2 252.2 L429.9 247.1 L428.6 241.9 L427.3 236.9 L425.9 231.9 L424.4 226.9 L422.9 222.0 L421.3 217.1 L419.6 212.3 L417.9 207.6 L416.1 202.9 L414.3 198.3 L412.4 193.8 L410.4 189.3 L408.3 184.9 L406.2 180.5 L404.0 176.3 L401.8 172.1'/><path d='M407.6 587.1 L411.0 583.0 L414.2 578.9 L417.4 574.7 L420.4 570.4 L423.3 566.0 L426.2 561.6 L428.9 557.0 L431.6 552.4 L434.1 547.7 L436.6 542.9 L439.0 538.1 L441.3 533.2 L443.5 528.2 L445.6 523.2 L447.7 518.1 L449.6 513.0 L451.5 507.8 L453.3 502.6 L455.0 497.3 L456.6 491.9 L458.1 486.6 L459.6 481.1 L461.0 475.7 L462.3 470.2 L463.5 464.6 L464.6 459.1 L465.7 453.5 L466.6 447.9 L467.5 442.2 L468.4 436.5 L469.1 430.9 L469.8 425.1 L470.3 419.4 L470.8 413.7 L471.3 407.9 L471.6 402.1 L471.9 396.4 L472.1 390.6 L472.2 384.8 L472.2 379.0 L472.2 373.2 L472.1 367.4 L471.9 361.6 L471.6 355.9 L471.3 350.1 L470.8 344.3 L470.3 338.6 L469.8 332.9 L469.1 327.1 L468.4 321.5 L467.5 315.8 L466.6 310.1 L465.7 304.5 L464.6 298.9 L463.5 293.4 L462.3 287.8 L461.0 282.3 L459.6 276.9 L458.1 271.4 L456.6 266.1 L455.0 260.7 L453.3 255.4 L451.5 250.2 L449.6 245.0 L447.7 239.9 L445.6 234.8 L443.5 229.8 L441.3 224.8 L439.0 219.9 L436.6 215.1 L434.1 210.3 L431.6 205.6 L428.9 201.0 L426.2 196.4 L423.3 192.0 L420.4 187.6 L417.4 183.3 L414.2 179.1 L411.0 175.0 L407.6 170.9'/><path d='M413.1 588.6 L417.4 584.9 L421.7 581.0 L425.8 576.9 L429.8 572.8 L433.6 568.5 L437.4 564.2 L441.0 559.8 L444.5 555.2 L447.9 550.6 L451.2 545.9 L454.4 541.1 L457.5 536.2 L460.4 531.2 L463.2 526.2 L465.9 521.1 L468.5 515.9 L471.0 510.7 L473.4 505.4 L475.7 500.0 L477.9 494.6 L479.9 489.2 L481.9 483.7 L483.7 478.1 L485.5 472.5 L487.1 466.8 L488.6 461.2 L490.0 455.4 L491.4 449.7 L492.6 443.9 L493.7 438.1 L494.7 432.3 L495.6 426.4 L496.3 420.5 L497.0 414.6 L497.6 408.7 L498.1 402.8 L498.4 396.8 L498.7 390.9 L498.9 385.0 L498.9 379.0 L498.9 373.0 L498.7 367.1 L498.4 361.2 L498.1 355.2 L497.6 349.3 L497.0 343.4 L496.3 337.5 L495.6 331.6 L494.7 325.7 L493.7 319.9 L492.6 314.1 L491.4 308.3 L490.0 302.6 L488.6 296.8 L487.1 291.2 L485.5 285.5 L483.7 279.9 L481.9 274.3 L479.9 268.8 L477.9 263.4 L475.7 258.0 L473.4 252.6 L471.0 247.3 L468.5 242.1 L465.9 236.9 L463.2 231.8 L460.4 226.8 L457.5 221.8 L454.4 216.9 L451.2 212.1 L447.9 207.4 L444.5 202.8 L441.0 198.2 L437.4 193.8 L433.6 189.5 L429.8 185.2 L425.8 181.1 L421.7 177.0 L417.4 173.1 L413.1 169.4'/><path d='M417.9 590.7 L423.2 587.2 L428.4 583.5 L433.4 579.8 L438.3 575.8 L443.1 571.8 L447.7 567.6 L452.2 563.3 L456.5 558.9 L460.7 554.4 L464.8 549.7 L468.7 545.0 L472.6 540.1 L476.2 535.2 L479.8 530.1 L483.2 525.0 L486.4 519.8 L489.6 514.5 L492.6 509.2 L495.4 503.7 L498.1 498.2 L500.7 492.7 L503.2 487.0 L505.5 481.3 L507.7 475.6 L509.8 469.8 L511.7 464.0 L513.5 458.1 L515.2 452.2 L516.7 446.2 L518.1 440.2 L519.4 434.2 L520.5 428.1 L521.5 422.0 L522.3 415.9 L523.1 409.8 L523.7 403.7 L524.1 397.5 L524.5 391.3 L524.7 385.2 L524.7 379.0 L524.7 372.8 L524.5 366.7 L524.1 360.5 L523.7 354.3 L523.1 348.2 L522.3 342.1 L521.5 336.0 L520.5 329.9 L519.4 323.8 L518.1 317.8 L516.7 311.8 L515.2 305.8 L513.5 299.9 L511.7 294.0 L509.8 288.2 L507.7 282.4 L505.5 276.7 L503.2 271.0 L500.7 265.3 L498.1 259.8 L495.4 254.3 L492.6 248.8 L489.6 243.5 L486.4 238.2 L483.2 233.0 L479.8 227.9 L476.2 222.8 L472.6 217.9 L468.7 213.0 L464.8 208.3 L460.7 203.6 L456.5 199.1 L452.2 194.7 L447.7 190.4 L443.1 186.2 L438.3 182.2 L433.4 178.2 L428.4 174.5 L423.2 170.8 L417.9 167.3'/><path d='M422.0 593.1 L428.1 590.0 L434.1 586.7 L440.0 583.2 L445.7 579.6 L451.3 575.8 L456.8 571.8 L462.1 567.7 L467.2 563.5 L472.2 559.1 L477.1 554.5 L481.8 549.9 L486.3 545.1 L490.7 540.2 L494.9 535.1 L499.0 530.0 L503.0 524.8 L506.7 519.4 L510.4 514.0 L513.8 508.5 L517.1 502.9 L520.3 497.2 L523.3 491.4 L526.1 485.5 L528.8 479.6 L531.3 473.6 L533.6 467.6 L535.8 461.5 L537.8 455.4 L539.7 449.2 L541.4 442.9 L542.9 436.6 L544.3 430.3 L545.5 424.0 L546.6 417.6 L547.5 411.2 L548.2 404.8 L548.8 398.4 L549.2 391.9 L549.4 385.5 L549.5 379.0 L549.4 372.5 L549.2 366.1 L548.8 359.6 L548.2 353.2 L547.5 346.8 L546.6 340.4 L545.5 334.0 L544.3 327.7 L542.9 321.4 L541.4 315.1 L539.7 308.8 L537.8 302.6 L535.8 296.5 L533.6 290.4 L531.3 284.4 L528.8 278.4 L526.1 272.5 L523.3 266.6 L520.3 260.8 L517.1 255.1 L513.8 249.5 L510.4 244.0 L506.7 238.6 L503.0 233.2 L499.0 228.0 L494.9 222.9 L490.7 217.8 L486.3 212.9 L481.8 208.1 L477.1 203.5 L472.2 198.9 L467.2 194.5 L462.1 190.3 L456.8 186.2 L451.3 182.2 L445.7 178.4 L440.0 174.8 L434.1 171.3 L428.1 168.0 L422.0 164.9'/><path d='M425.2 595.8 L432.1 593.2 L438.8 590.3 L445.4 587.2 L451.9 584.0 L458.2 580.5 L464.4 576.8 L470.4 573.0 L476.3 568.9 L482.1 564.7 L487.7 560.3 L493.1 555.8 L498.4 551.1 L503.5 546.3 L508.4 541.3 L513.2 536.2 L517.8 530.9 L522.3 525.5 L526.5 520.0 L530.6 514.4 L534.5 508.7 L538.2 502.8 L541.8 496.9 L545.1 490.8 L548.3 484.7 L551.3 478.5 L554.1 472.2 L556.7 465.9 L559.1 459.5 L561.3 453.0 L563.4 446.4 L565.2 439.8 L566.9 433.2 L568.3 426.5 L569.6 419.8 L570.7 413.0 L571.5 406.3 L572.2 399.5 L572.7 392.6 L573.0 385.8 L573.1 379.0 L573.0 372.2 L572.7 365.4 L572.2 358.5 L571.5 351.7 L570.7 345.0 L569.6 338.2 L568.3 331.5 L566.9 324.8 L565.2 318.2 L563.4 311.6 L561.3 305.0 L559.1 298.5 L556.7 292.1 L554.1 285.8 L551.3 279.5 L548.3 273.3 L545.1 267.2 L541.8 261.1 L538.2 255.2 L534.5 249.3 L530.6 243.6 L526.5 238.0 L522.3 232.5 L517.8 227.1 L513.2 221.8 L508.4 216.7 L503.5 211.7 L498.4 206.9 L493.1 202.2 L487.7 197.7 L482.1 193.3 L476.3 189.1 L470.4 185.0 L464.4 181.2 L458.2 177.5 L451.9 174.0 L445.4 170.8 L438.8 167.7 L432.1 164.8 L425.2 162.2'/><path d='M427.5 598.9 L434.9 596.8 L442.2 594.4 L449.4 591.8 L456.5 589.0 L463.5 585.9 L470.3 582.6 L477.0 579.1 L483.6 575.3 L490.0 571.4 L496.3 567.2 L502.5 562.9 L508.4 558.4 L514.2 553.6 L519.9 548.7 L525.4 543.6 L530.6 538.4 L535.7 533.0 L540.7 527.4 L545.4 521.7 L549.9 515.8 L554.2 509.8 L558.4 503.7 L562.3 497.5 L566.0 491.1 L569.5 484.6 L572.8 478.1 L575.8 471.4 L578.7 464.6 L581.3 457.8 L583.7 450.9 L585.9 443.9 L587.9 436.8 L589.6 429.7 L591.1 422.6 L592.4 415.4 L593.4 408.1 L594.2 400.9 L594.8 393.6 L595.2 386.3 L595.3 379.0 L595.2 371.7 L594.8 364.4 L594.2 357.1 L593.4 349.9 L592.4 342.6 L591.1 335.4 L589.6 328.3 L587.9 321.2 L585.9 314.1 L583.7 307.1 L581.3 300.2 L578.7 293.4 L575.8 286.6 L572.8 279.9 L569.5 273.4 L566.0 266.9 L562.3 260.5 L558.4 254.3 L554.2 248.2 L549.9 242.2 L545.4 236.3 L540.7 230.6 L535.7 225.0 L530.6 219.6 L525.4 214.4 L519.9 209.3 L514.2 204.4 L508.4 199.6 L502.5 195.1 L496.3 190.8 L490.0 186.6 L483.6 182.7 L477.0 178.9 L470.3 175.4 L463.5 172.1 L456.5 169.0 L449.4 166.2 L442.2 163.6 L434.9 161.2 L427.5 159.1'/><path d='M350.0 602.2 L350.1 601.5 L350.3 600.8 L350.5 600.2 L350.8 599.5 L351.1 598.9 L351.5 598.2 L351.9 597.6 L352.3 597.0 L352.8 596.4 L353.4 595.8 L353.9 595.2 L354.6 594.7 L355.2 594.1 L355.9 593.6 L356.6 593.1 L357.4 592.5 L358.2 592.1 L359.0 591.6 L359.8 591.1 L360.7 590.7 L361.6 590.2 L362.6 589.8 L363.5 589.4 L364.5 589.0 L365.5 588.6 L366.6 588.3 L367.6 588.0 L368.7 587.6 L369.8 587.3 L371.0 587.1 L372.1 586.8 L373.3 586.5 L374.4 586.3 L375.6 586.1 L376.8 585.9 L378.0 585.7 L379.3 585.6 L380.5 585.4 L381.7 585.3 L383.0 585.2 L384.2 585.1 L385.5 585.1 L386.8 585.0 L388.0 585.0 L389.3 585.0 L390.6 585.0 L391.8 585.0 L393.1 585.1 L394.4 585.1 L395.6 585.2 L396.9 585.3 L398.1 585.4 L399.3 585.6 L400.6 585.7 L401.8 585.9 L403.0 586.1 L404.2 586.3 L405.3 586.5 L406.5 586.8 L407.6 587.1 L408.8 587.3 L409.9 587.6 L411.0 588.0 L412.0 588.3 L413.1 588.6 L414.1 589.0 L415.1 589.4 L416.0 589.8 L417.0 590.2 L417.9 590.7 L418.8 591.1 L419.6 591.6 L420.4 592.1 L421.2 592.5 L422.0 593.1 L422.7 593.6 L423.4 594.1 L424.0 594.7 L424.7 595.2 L425.2 595.8 L425.8 596.4 L426.3 597.0 L426.7 597.6 L427.1 598.2 L427.5 598.9 L427.8 599.5 L428.1 600.2 L428.3 600.8 L428.5 601.5 L428.6 602.2'/><path d='M311.8 591.9 L312.3 590.7 L312.9 589.4 L313.6 588.2 L314.3 587.0 L315.1 585.9 L316.1 584.7 L317.0 583.6 L318.1 582.6 L319.2 581.5 L320.4 580.5 L321.6 579.5 L323.0 578.5 L324.3 577.6 L325.8 576.7 L327.3 575.8 L328.8 574.9 L330.4 574.1 L332.1 573.3 L333.8 572.5 L335.5 571.8 L337.3 571.1 L339.2 570.4 L341.1 569.8 L343.0 569.1 L345.0 568.5 L347.0 568.0 L349.0 567.5 L351.0 566.9 L353.1 566.5 L355.3 566.0 L357.4 565.6 L359.6 565.2 L361.8 564.9 L364.0 564.5 L366.2 564.2 L368.5 564.0 L370.8 563.7 L373.1 563.5 L375.4 563.3 L377.7 563.2 L380.0 563.0 L382.3 562.9 L384.6 562.9 L387.0 562.8 L389.3 562.8 L391.6 562.8 L394.0 562.9 L396.3 562.9 L398.6 563.0 L400.9 563.2 L403.2 563.3 L405.5 563.5 L407.8 563.7 L410.1 564.0 L412.4 564.2 L414.6 564.5 L416.8 564.9 L419.0 565.2 L421.2 565.6 L423.3 566.0 L425.5 566.5 L427.6 566.9 L429.6 567.5 L431.6 568.0 L433.6 568.5 L435.6 569.1 L437.5 569.8 L439.4 570.4 L441.3 571.1 L443.1 571.8 L444.8 572.5 L446.5 573.3 L448.2 574.1 L449.8 574.9 L451.3 575.8 L452.8 576.7 L454.3 577.6 L455.6 578.5 L457.0 579.5 L458.2 580.5 L459.4 581.5 L460.5 582.6 L461.6 583.6 L462.5 584.7 L463.5 585.9 L464.3 587.0 L465.0 588.2 L465.7 589.4 L466.3 590.7 L466.8 591.9'/><path d='M276.0 575.2 L277.0 573.6 L278.2 571.9 L279.5 570.3 L280.8 568.8 L282.3 567.2 L283.8 565.8 L285.5 564.4 L287.2 563.0 L289.0 561.6 L290.9 560.3 L292.9 559.1 L294.9 557.9 L297.1 556.7 L299.3 555.6 L301.5 554.5 L303.9 553.5 L306.3 552.5 L308.7 551.5 L311.2 550.6 L313.8 549.7 L316.4 548.9 L319.1 548.1 L321.8 547.3 L324.6 546.6 L327.4 545.9 L330.2 545.2 L333.1 544.6 L336.0 544.0 L339.0 543.4 L342.0 542.9 L345.0 542.5 L348.0 542.0 L351.1 541.6 L354.2 541.2 L357.3 540.9 L360.5 540.6 L363.6 540.3 L366.8 540.0 L370.0 539.8 L373.2 539.6 L376.4 539.5 L379.6 539.4 L382.8 539.3 L386.1 539.2 L389.3 539.2 L392.5 539.2 L395.8 539.3 L399.0 539.4 L402.2 539.5 L405.4 539.6 L408.6 539.8 L411.8 540.0 L415.0 540.3 L418.1 540.6 L421.3 540.9 L424.4 541.2 L427.5 541.6 L430.6 542.0 L433.6 542.5 L436.6 542.9 L439.6 543.4 L442.6 544.0 L445.5 544.6 L448.4 545.2 L451.2 545.9 L454.0 546.6 L456.8 547.3 L459.5 548.1 L462.2 548.9 L464.8 549.7 L467.4 550.6 L469.9 551.5 L472.3 552.5 L474.7 553.5 L477.1 554.5 L479.3 555.6 L481.5 556.7 L483.7 557.9 L485.7 559.1 L487.7 560.3 L489.6 561.6 L491.4 563.0 L493.1 564.4 L494.8 565.8 L496.3 567.2 L497.8 568.8 L499.1 570.3 L500.4 571.9 L501.6 573.6 L502.6 575.2'/><path d='M243.6 552.6 L245.3 550.7 L247.2 548.8 L249.1 547.0 L251.1 545.3 L253.2 543.6 L255.5 542.0 L257.8 540.5 L260.3 539.0 L262.8 537.6 L265.4 536.2 L268.1 534.8 L270.8 533.6 L273.7 532.3 L276.6 531.1 L279.6 530.0 L282.6 528.9 L285.7 527.9 L288.9 526.9 L292.1 525.9 L295.4 525.0 L298.8 524.2 L302.2 523.3 L305.6 522.5 L309.1 521.8 L312.7 521.1 L316.2 520.4 L319.9 519.8 L323.5 519.2 L327.2 518.6 L330.9 518.1 L334.7 517.6 L338.5 517.2 L342.3 516.8 L346.1 516.4 L350.0 516.1 L353.8 515.7 L357.7 515.5 L361.6 515.2 L365.6 515.0 L369.5 514.8 L373.5 514.7 L377.4 514.6 L381.4 514.5 L385.3 514.4 L389.3 514.4 L393.3 514.4 L397.2 514.5 L401.2 514.6 L405.1 514.7 L409.1 514.8 L413.0 515.0 L417.0 515.2 L420.9 515.5 L424.8 515.7 L428.6 516.1 L432.5 516.4 L436.3 516.8 L440.1 517.2 L443.9 517.6 L447.7 518.1 L451.4 518.6 L455.1 519.2 L458.7 519.8 L462.4 520.4 L465.9 521.1 L469.5 521.8 L473.0 522.5 L476.4 523.3 L479.8 524.2 L483.2 525.0 L486.5 525.9 L489.7 526.9 L492.9 527.9 L496.0 528.9 L499.0 530.0 L502.0 531.1 L504.9 532.3 L507.8 533.6 L510.5 534.8 L513.2 536.2 L515.8 537.6 L518.3 539.0 L520.8 540.5 L523.1 542.0 L525.4 543.6 L527.5 545.3 L529.5 547.0 L531.4 548.8 L533.3 550.7 L535.0 552.6'/><path d='M215.7 524.7 L218.1 522.7 L220.6 520.9 L223.2 519.2 L225.9 517.5 L228.7 515.8 L231.6 514.3 L234.6 512.8 L237.7 511.4 L240.8 510.0 L244.1 508.7 L247.4 507.4 L250.8 506.2 L254.3 505.0 L257.9 503.9 L261.5 502.9 L265.1 501.8 L268.9 500.9 L272.7 499.9 L276.5 499.1 L280.5 498.2 L284.4 497.4 L288.4 496.7 L292.5 496.0 L296.6 495.3 L300.7 494.6 L304.9 494.0 L309.1 493.4 L313.4 492.9 L317.7 492.4 L322.0 491.9 L326.4 491.5 L330.7 491.1 L335.1 490.7 L339.6 490.4 L344.0 490.1 L348.5 489.8 L353.0 489.5 L357.5 489.3 L362.0 489.1 L366.5 489.0 L371.1 488.8 L375.6 488.7 L380.2 488.7 L384.7 488.6 L389.3 488.6 L393.9 488.6 L398.4 488.7 L403.0 488.7 L407.5 488.8 L412.1 489.0 L416.6 489.1 L421.1 489.3 L425.6 489.5 L430.1 489.8 L434.6 490.1 L439.0 490.4 L443.5 490.7 L447.9 491.1 L452.2 491.5 L456.6 491.9 L460.9 492.4 L465.2 492.9 L469.5 493.4 L473.7 494.0 L477.9 494.6 L482.0 495.3 L486.1 496.0 L490.2 496.7 L494.2 497.4 L498.1 498.2 L502.1 499.1 L505.9 499.9 L509.7 500.9 L513.5 501.8 L517.1 502.9 L520.7 503.9 L524.3 505.0 L527.8 506.2 L531.2 507.4 L534.5 508.7 L537.8 510.0 L540.9 511.4 L544.0 512.8 L547.0 514.3 L549.9 515.8 L552.7 517.5 L555.4 519.2 L558.0 520.9 L560.5 522.7 L562.9 524.7'/><path d='M193.1 492.3 L196.1 490.6 L199.2 489.0 L202.4 487.5 L205.7 486.0 L209.1 484.6 L212.6 483.3 L216.2 482.0 L219.8 480.8 L223.5 479.6 L227.3 478.5 L231.2 477.5 L235.1 476.4 L239.1 475.5 L243.2 474.5 L247.3 473.6 L251.5 472.8 L255.8 472.0 L260.1 471.2 L264.4 470.5 L268.8 469.8 L273.3 469.2 L277.8 468.5 L282.3 467.9 L286.9 467.4 L291.5 466.8 L296.2 466.3 L300.8 465.9 L305.6 465.4 L310.3 465.0 L315.1 464.6 L319.9 464.3 L324.8 464.0 L329.7 463.7 L334.6 463.4 L339.5 463.1 L344.4 462.9 L349.3 462.7 L354.3 462.5 L359.3 462.4 L364.3 462.2 L369.3 462.1 L374.3 462.0 L379.3 462.0 L384.3 462.0 L389.3 461.9 L394.3 462.0 L399.3 462.0 L404.3 462.0 L409.3 462.1 L414.3 462.2 L419.3 462.4 L424.3 462.5 L429.3 462.7 L434.2 462.9 L439.1 463.1 L444.0 463.4 L448.9 463.7 L453.8 464.0 L458.7 464.3 L463.5 464.6 L468.3 465.0 L473.0 465.4 L477.8 465.9 L482.4 466.3 L487.1 466.8 L491.7 467.4 L496.3 467.9 L500.8 468.5 L505.3 469.2 L509.8 469.8 L514.2 470.5 L518.5 471.2 L522.8 472.0 L527.1 472.8 L531.3 473.6 L535.4 474.5 L539.5 475.5 L543.5 476.4 L547.4 477.5 L551.3 478.5 L555.1 479.6 L558.8 480.8 L562.4 482.0 L566.0 483.3 L569.5 484.6 L572.9 486.0 L576.2 487.5 L579.4 489.0 L582.5 490.6 L585.5 492.3'/><path d='M176.4 456.5 L179.9 455.3 L183.5 454.1 L187.2 453.0 L191.0 451.9 L194.9 450.9 L198.8 449.9 L202.8 449.0 L206.9 448.1 L211.0 447.2 L215.2 446.4 L219.5 445.7 L223.8 444.9 L228.2 444.2 L232.7 443.6 L237.2 442.9 L241.8 442.3 L246.4 441.7 L251.0 441.2 L255.7 440.7 L260.5 440.2 L265.3 439.7 L270.2 439.3 L275.0 438.9 L280.0 438.5 L284.9 438.1 L289.9 437.7 L295.0 437.4 L300.0 437.1 L305.1 436.8 L310.2 436.5 L315.4 436.3 L320.6 436.1 L325.8 435.9 L331.0 435.7 L336.2 435.5 L341.5 435.3 L346.8 435.2 L352.0 435.1 L357.3 434.9 L362.7 434.9 L368.0 434.8 L373.3 434.7 L378.6 434.7 L384.0 434.7 L389.3 434.6 L394.6 434.7 L400.0 434.7 L405.3 434.7 L410.6 434.8 L415.9 434.9 L421.3 434.9 L426.6 435.1 L431.8 435.2 L437.1 435.3 L442.4 435.5 L447.6 435.7 L452.8 435.9 L458.0 436.1 L463.2 436.3 L468.4 436.5 L473.5 436.8 L478.6 437.1 L483.6 437.4 L488.7 437.7 L493.7 438.1 L498.6 438.5 L503.6 438.9 L508.4 439.3 L513.3 439.7 L518.1 440.2 L522.9 440.7 L527.6 441.2 L532.2 441.7 L536.8 442.3 L541.4 442.9 L545.9 443.6 L550.4 444.2 L554.8 444.9 L559.1 445.7 L563.4 446.4 L567.6 447.2 L571.7 448.1 L575.8 449.0 L579.8 449.9 L583.7 450.9 L587.6 451.9 L591.4 453.0 L595.1 454.1 L598.7 455.3 L602.2 456.5'/><path d='M166.1 418.3 L170.0 417.7 L174.0 417.1 L178.0 416.5 L182.1 415.9 L186.2 415.4 L190.4 414.8 L194.7 414.4 L199.1 413.9 L203.5 413.5 L207.9 413.0 L212.5 412.6 L217.0 412.2 L221.7 411.9 L226.4 411.5 L231.1 411.2 L235.9 410.9 L240.7 410.6 L245.6 410.3 L250.6 410.0 L255.5 409.8 L260.5 409.6 L265.6 409.3 L270.7 409.1 L275.8 408.9 L281.0 408.7 L286.2 408.5 L291.4 408.4 L296.7 408.2 L302.0 408.0 L307.3 407.9 L312.7 407.8 L318.1 407.7 L323.4 407.5 L328.9 407.4 L334.3 407.4 L339.7 407.3 L345.2 407.2 L350.7 407.1 L356.2 407.1 L361.7 407.0 L367.2 407.0 L372.7 407.0 L378.2 406.9 L383.8 406.9 L389.3 406.9 L394.8 406.9 L400.4 406.9 L405.9 407.0 L411.4 407.0 L416.9 407.0 L422.4 407.1 L427.9 407.1 L433.4 407.2 L438.9 407.3 L444.3 407.4 L449.7 407.4 L455.2 407.5 L460.5 407.7 L465.9 407.8 L471.3 407.9 L476.6 408.0 L481.9 408.2 L487.2 408.4 L492.4 408.5 L497.6 408.7 L502.8 408.9 L507.9 409.1 L513.0 409.3 L518.1 409.6 L523.1 409.8 L528.0 410.0 L533.0 410.3 L537.9 410.6 L542.7 410.9 L547.5 411.2 L552.2 411.5 L556.9 411.9 L561.6 412.2 L566.1 412.6 L570.7 413.0 L575.1 413.5 L579.5 413.9 L583.9 414.4 L588.2 414.8 L592.4 415.4 L596.5 415.9 L600.6 416.5 L604.6 417.1 L608.6 417.7 L612.5 418.3'/><path d='M166.1 339.7 L170.0 340.3 L174.0 340.9 L178.0 341.5 L182.1 342.1 L186.2 342.6 L190.4 343.2 L194.7 343.6 L199.1 344.1 L203.5 344.5 L207.9 345.0 L212.5 345.4 L217.0 345.8 L221.7 346.1 L226.4 346.5 L231.1 346.8 L235.9 347.1 L240.7 347.4 L245.6 347.7 L250.6 348.0 L255.5 348.2 L260.5 348.4 L265.6 348.7 L270.7 348.9 L275.8 349.1 L281.0 349.3 L286.2 349.5 L291.4 349.6 L296.7 349.8 L302.0 350.0 L307.3 350.1 L312.7 350.2 L318.1 350.3 L323.4 350.5 L328.9 350.6 L334.3 350.6 L339.7 350.7 L345.2 350.8 L350.7 350.9 L356.2 350.9 L361.7 351.0 L367.2 351.0 L372.7 351.0 L378.2 351.1 L383.8 351.1 L389.3 351.1 L394.8 351.1 L400.4 351.1 L405.9 351.0 L411.4 351.0 L416.9 351.0 L422.4 350.9 L427.9 350.9 L433.4 350.8 L438.9 350.7 L444.3 350.6 L449.7 350.6 L455.2 350.5 L460.5 350.3 L465.9 350.2 L471.3 350.1 L476.6 350.0 L481.9 349.8 L487.2 349.6 L492.4 349.5 L497.6 349.3 L502.8 349.1 L507.9 348.9 L513.0 348.7 L518.1 348.4 L523.1 348.2 L528.0 348.0 L533.0 347.7 L537.9 347.4 L542.7 347.1 L547.5 346.8 L552.2 346.5 L556.9 346.1 L561.6 345.8 L566.1 345.4 L570.7 345.0 L575.1 344.5 L579.5 344.1 L583.9 343.6 L588.2 343.2 L592.4 342.6 L596.5 342.1 L600.6 341.5 L604.6 340.9 L608.6 340.3 L612.5 339.7'/><path d='M176.4 301.5 L179.9 302.7 L183.5 303.9 L187.2 305.0 L191.0 306.1 L194.9 307.1 L198.8 308.1 L202.8 309.0 L206.9 309.9 L211.0 310.8 L215.2 311.6 L219.5 312.3 L223.8 313.1 L228.2 313.8 L232.7 314.4 L237.2 315.1 L241.8 315.7 L246.4 316.3 L251.0 316.8 L255.7 317.3 L260.5 317.8 L265.3 318.3 L270.2 318.7 L275.0 319.1 L280.0 319.5 L284.9 319.9 L289.9 320.3 L295.0 320.6 L300.0 320.9 L305.1 321.2 L310.2 321.5 L315.4 321.7 L320.6 321.9 L325.8 322.1 L331.0 322.3 L336.2 322.5 L341.5 322.7 L346.8 322.8 L352.0 322.9 L357.3 323.1 L362.7 323.1 L368.0 323.2 L373.3 323.3 L378.6 323.3 L384.0 323.3 L389.3 323.4 L394.6 323.3 L400.0 323.3 L405.3 323.3 L410.6 323.2 L415.9 323.1 L421.3 323.1 L426.6 322.9 L431.8 322.8 L437.1 322.7 L442.4 322.5 L447.6 322.3 L452.8 322.1 L458.0 321.9 L463.2 321.7 L468.4 321.5 L473.5 321.2 L478.6 320.9 L483.6 320.6 L488.7 320.3 L493.7 319.9 L498.6 319.5 L503.6 319.1 L508.4 318.7 L513.3 318.3 L518.1 317.8 L522.9 317.3 L527.6 316.8 L532.2 316.3 L536.8 315.7 L541.4 315.1 L545.9 314.4 L550.4 313.8 L554.8 313.1 L559.1 312.3 L563.4 311.6 L567.6 310.8 L571.7 309.9 L575.8 309.0 L579.8 308.1 L583.7 307.1 L587.6 306.1 L591.4 305.0 L595.1 303.9 L598.7 302.7 L602.2 301.5'/><path d='M193.1 265.7 L196.1 267.4 L199.2 269.0 L202.4 270.5 L205.7 272.0 L209.1 273.4 L212.6 274.7 L216.2 276.0 L219.8 277.2 L223.5 278.4 L227.3 279.5 L231.2 280.5 L235.1 281.6 L239.1 282.5 L243.2 283.5 L247.3 284.4 L251.5 285.2 L255.8 286.0 L260.1 286.8 L264.4 287.5 L268.8 288.2 L273.3 288.8 L277.8 289.5 L282.3 290.1 L286.9 290.6 L291.5 291.2 L296.2 291.7 L300.8 292.1 L305.6 292.6 L310.3 293.0 L315.1 293.4 L319.9 293.7 L324.8 294.0 L329.7 294.3 L334.6 294.6 L339.5 294.9 L344.4 295.1 L349.3 295.3 L354.3 295.5 L359.3 295.6 L364.3 295.8 L369.3 295.9 L374.3 296.0 L379.3 296.0 L384.3 296.0 L389.3 296.1 L394.3 296.0 L399.3 296.0 L404.3 296.0 L409.3 295.9 L414.3 295.8 L419.3 295.6 L424.3 295.5 L429.3 295.3 L434.2 295.1 L439.1 294.9 L444.0 294.6 L448.9 294.3 L453.8 294.0 L458.7 293.7 L463.5 293.4 L468.3 293.0 L473.0 292.6 L477.8 292.1 L482.4 291.7 L487.1 291.2 L491.7 290.6 L496.3 290.1 L500.8 289.5 L505.3 288.8 L509.8 288.2 L514.2 287.5 L518.5 286.8 L522.8 286.0 L527.1 285.2 L531.3 284.4 L535.4 283.5 L539.5 282.5 L543.5 281.6 L547.4 280.5 L551.3 279.5 L555.1 278.4 L558.8 277.2 L562.4 276.0 L566.0 274.7 L569.5 273.4 L572.9 272.0 L576.2 270.5 L579.4 269.0 L582.5 267.4 L585.5 265.7'/><path d='M215.7 233.3 L218.1 235.3 L220.6 237.1 L223.2 238.8 L225.9 240.5 L228.7 242.2 L231.6 243.7 L234.6 245.2 L237.7 246.6 L240.8 248.0 L244.1 249.3 L247.4 250.6 L250.8 251.8 L254.3 253.0 L257.9 254.1 L261.5 255.1 L265.1 256.2 L268.9 257.1 L272.7 258.1 L276.5 258.9 L280.5 259.8 L284.4 260.6 L288.4 261.3 L292.5 262.0 L296.6 262.7 L300.7 263.4 L304.9 264.0 L309.1 264.6 L313.4 265.1 L317.7 265.6 L322.0 266.1 L326.4 266.5 L330.7 266.9 L335.1 267.3 L339.6 267.6 L344.0 267.9 L348.5 268.2 L353.0 268.5 L357.5 268.7 L362.0 268.9 L366.5 269.0 L371.1 269.2 L375.6 269.3 L380.2 269.3 L384.7 269.4 L389.3 269.4 L393.9 269.4 L398.4 269.3 L403.0 269.3 L407.5 269.2 L412.1 269.0 L416.6 268.9 L421.1 268.7 L425.6 268.5 L430.1 268.2 L434.6 267.9 L439.0 267.6 L443.5 267.3 L447.9 266.9 L452.2 266.5 L456.6 266.1 L460.9 265.6 L465.2 265.1 L469.5 264.6 L473.7 264.0 L477.9 263.4 L482.0 262.7 L486.1 262.0 L490.2 261.3 L494.2 260.6 L498.1 259.8 L502.1 258.9 L505.9 258.1 L509.7 257.1 L513.5 256.2 L517.1 255.1 L520.7 254.1 L524.3 253.0 L527.8 251.8 L531.2 250.6 L534.5 249.3 L537.8 248.0 L540.9 246.6 L544.0 245.2 L547.0 243.7 L549.9 242.2 L552.7 240.5 L555.4 238.8 L558.0 237.1 L560.5 235.3 L562.9 233.3'/><path d='M243.6 205.4 L245.3 207.3 L247.2 209.2 L249.1 211.0 L251.1 212.7 L253.2 214.4 L255.5 216.0 L257.8 217.5 L260.3 219.0 L262.8 220.4 L265.4 221.8 L268.1 223.2 L270.8 224.4 L273.7 225.7 L276.6 226.9 L279.6 228.0 L282.6 229.1 L285.7 230.1 L288.9 231.1 L292.1 232.1 L295.4 233.0 L298.8 233.8 L302.2 234.7 L305.6 235.5 L309.1 236.2 L312.7 236.9 L316.2 237.6 L319.9 238.2 L323.5 238.8 L327.2 239.4 L330.9 239.9 L334.7 240.4 L338.5 240.8 L342.3 241.2 L346.1 241.6 L350.0 241.9 L353.8 242.3 L357.7 242.5 L361.6 242.8 L365.6 243.0 L369.5 243.2 L373.5 243.3 L377.4 243.4 L381.4 243.5 L385.3 243.6 L389.3 243.6 L393.3 243.6 L397.2 243.5 L401.2 243.4 L405.1 243.3 L409.1 243.2 L413.0 243.0 L417.0 242.8 L420.9 242.5 L424.8 242.3 L428.6 241.9 L432.5 241.6 L436.3 241.2 L440.1 240.8 L443.9 240.4 L447.7 239.9 L451.4 239.4 L455.1 238.8 L458.7 238.2 L462.4 237.6 L465.9 236.9 L469.5 236.2 L473.0 235.5 L476.4 234.7 L479.8 233.8 L483.2 233.0 L486.5 232.1 L489.7 231.1 L492.9 230.1 L496.0 229.1 L499.0 228.0 L502.0 226.9 L504.9 225.7 L507.8 224.4 L510.5 223.2 L513.2 221.8 L515.8 220.4 L518.3 219.0 L520.8 217.5 L523.1 216.0 L525.4 214.4 L527.5 212.7 L529.5 211.0 L531.4 209.2 L533.3 207.3 L535.0 205.4'/><path d='M276.0 182.8 L277.0 184.4 L278.2 186.1 L279.5 187.7 L280.8 189.2 L282.3 190.8 L283.8 192.2 L285.5 193.6 L287.2 195.0 L289.0 196.4 L290.9 197.7 L292.9 198.9 L294.9 200.1 L297.1 201.3 L299.3 202.4 L301.5 203.5 L303.9 204.5 L306.3 205.5 L308.7 206.5 L311.2 207.4 L313.8 208.3 L316.4 209.1 L319.1 209.9 L321.8 210.7 L324.6 211.4 L327.4 212.1 L330.2 212.8 L333.1 213.4 L336.0 214.0 L339.0 214.6 L342.0 215.1 L345.0 215.5 L348.0 216.0 L351.1 216.4 L354.2 216.8 L357.3 217.1 L360.5 217.4 L363.6 217.7 L366.8 218.0 L370.0 218.2 L373.2 218.4 L376.4 218.5 L379.6 218.6 L382.8 218.7 L386.1 218.8 L389.3 218.8 L392.5 218.8 L395.8 218.7 L399.0 218.6 L402.2 218.5 L405.4 218.4 L408.6 218.2 L411.8 218.0 L415.0 217.7 L418.1 217.4 L421.3 217.1 L424.4 216.8 L427.5 216.4 L430.6 216.0 L433.6 215.5 L436.6 215.1 L439.6 214.6 L442.6 214.0 L445.5 213.4 L448.4 212.8 L451.2 212.1 L454.0 211.4 L456.8 210.7 L459.5 209.9 L462.2 209.1 L464.8 208.3 L467.4 207.4 L469.9 206.5 L472.3 205.5 L474.7 204.5 L477.1 203.5 L479.3 202.4 L481.5 201.3 L483.7 200.1 L485.7 198.9 L487.7 197.7 L489.6 196.4 L491.4 195.0 L493.1 193.6 L494.8 192.2 L496.3 190.8 L497.8 189.2 L499.1 187.7 L500.4 186.1 L501.6 184.4 L502.6 182.8'/><path d='M311.8 166.1 L312.3 167.3 L312.9 168.6 L313.6 169.8 L314.3 171.0 L315.1 172.1 L316.1 173.3 L317.0 174.4 L318.1 175.4 L319.2 176.5 L320.4 177.5 L321.6 178.5 L323.0 179.5 L324.3 180.4 L325.8 181.3 L327.3 182.2 L328.8 183.1 L330.4 183.9 L332.1 184.7 L333.8 185.5 L335.5 186.2 L337.3 186.9 L339.2 187.6 L341.1 188.2 L343.0 188.9 L345.0 189.5 L347.0 190.0 L349.0 190.5 L351.0 191.1 L353.1 191.5 L355.3 192.0 L357.4 192.4 L359.6 192.8 L361.8 193.1 L364.0 193.5 L366.2 193.8 L368.5 194.0 L370.8 194.3 L373.1 194.5 L375.4 194.7 L377.7 194.8 L380.0 195.0 L382.3 195.1 L384.6 195.1 L387.0 195.2 L389.3 195.2 L391.6 195.2 L394.0 195.1 L396.3 195.1 L398.6 195.0 L400.9 194.8 L403.2 194.7 L405.5 194.5 L407.8 194.3 L410.1 194.0 L412.4 193.8 L414.6 193.5 L416.8 193.1 L419.0 192.8 L421.2 192.4 L423.3 192.0 L425.5 191.5 L427.6 191.1 L429.6 190.5 L431.6 190.0 L433.6 189.5 L435.6 188.9 L437.5 188.2 L439.4 187.6 L441.3 186.9 L443.1 186.2 L444.8 185.5 L446.5 184.7 L448.2 183.9 L449.8 183.1 L451.3 182.2 L452.8 181.3 L454.3 180.4 L455.6 179.5 L457.0 178.5 L458.2 177.5 L459.4 176.5 L460.5 175.4 L461.6 174.4 L462.5 173.3 L463.5 172.1 L464.3 171.0 L465.0 169.8 L465.7 168.6 L466.3 167.3 L466.8 166.1'/><path d='M350.0 155.8 L350.1 156.5 L350.3 157.2 L350.5 157.8 L350.8 158.5 L351.1 159.1 L351.5 159.8 L351.9 160.4 L352.3 161.0 L352.8 161.6 L353.4 162.2 L353.9 162.8 L354.6 163.3 L355.2 163.9 L355.9 164.4 L356.6 164.9 L357.4 165.5 L358.2 165.9 L359.0 166.4 L359.8 166.9 L360.7 167.3 L361.6 167.8 L362.6 168.2 L363.5 168.6 L364.5 169.0 L365.5 169.4 L366.6 169.7 L367.6 170.0 L368.7 170.4 L369.8 170.7 L371.0 170.9 L372.1 171.2 L373.3 171.5 L374.4 171.7 L375.6 171.9 L376.8 172.1 L378.0 172.3 L379.3 172.4 L380.5 172.6 L381.7 172.7 L383.0 172.8 L384.2 172.9 L385.5 172.9 L386.8 173.0 L388.0 173.0 L389.3 173.0 L390.6 173.0 L391.8 173.0 L393.1 172.9 L394.4 172.9 L395.6 172.8 L396.9 172.7 L398.1 172.6 L399.3 172.4 L400.6 172.3 L401.8 172.1 L403.0 171.9 L404.2 171.7 L405.3 171.5 L406.5 171.2 L407.6 170.9 L408.8 170.7 L409.9 170.4 L411.0 170.0 L412.0 169.7 L413.1 169.4 L414.1 169.0 L415.1 168.6 L416.0 168.2 L417.0 167.8 L417.9 167.3 L418.8 166.9 L419.6 166.4 L420.4 165.9 L421.2 165.5 L422.0 164.9 L422.7 164.4 L423.4 163.9 L424.0 163.3 L424.7 162.8 L425.2 162.2 L425.8 161.6 L426.3 161.0 L426.7 160.4 L427.1 159.8 L427.5 159.1 L427.8 158.5 L428.1 157.8 L428.3 157.2 L428.5 156.5 L428.6 155.8'/></g><path d='M389.5 152.4 V605.6 M162.70000000000002 379.4 H615.9' stroke='#444' stroke-width='0.85' fill='none'/><circle cx='389.3' cy='379.0' r='226.6' fill='none' stroke='#111' stroke-width='1.3'/><path d='M601.6 458.1 L598.5 465.3 L595.1 472.5 L591.5 479.4 L587.6 486.3 L583.5 493.0 L579.2 499.5 L574.7 505.9 L569.9 512.1 L565.0 518.2 L559.8 524.0 L554.5 529.7 L548.9 535.2 L543.2 540.5 L537.3 545.6 L531.3 550.4 L525.1 555.1 L518.7 559.5 L512.2 563.7 L505.6 567.7 L498.8 571.4 L491.9 575.0 L484.9 578.2 L477.8 581.3 L470.7 584.0 L463.4 586.6 L456.0 588.9 L448.6 590.9 L441.1 592.7 L433.6 594.2 L426.0 595.5 L418.4 596.5 L410.8 597.3 L403.2 597.7 L395.5 598.0 L387.8 598.0 L380.2 597.7 L372.5 597.1 L364.9 596.4 L357.4 595.3 L349.8 594.0 L342.3 592.4 L334.9 590.6 L327.5 588.6 L320.2 586.3 L313.0 583.7 L305.9 580.9 L298.9 577.9 L292.0 574.7 L285.2 571.2 L278.5 567.4 L271.9 563.5 L265.5 559.3 L259.3 555.0 L253.1 550.4 L247.2 545.6 L241.4 540.6 L235.7 535.4 L230.3 530.0 L225.0 524.4 L219.9 518.7 L215.0 512.8 L210.3 506.7 L205.8 500.5 L201.5 494.1 L197.5 487.5 L193.6 480.9 L190.0 474.0 L186.6 467.1 L183.5 460.1 L180.6 452.9 L177.9 445.6 L175.5 438.3 L173.3 430.9 L171.4 423.3 L169.8 415.8 L168.4 408.1 L167.3 400.4 L166.4 392.7 L165.8 384.9 L165.5 377.1 L165.4 369.3 L165.6 361.5 L166.1 353.7 L166.8 345.9 L167.8 338.1 L169.1 330.4 L170.7 322.7 L172.5 315.0 L174.6 307.4 L177.0 299.9' fill='none' stroke='#0a78e8' stroke-width='2.1' stroke-dasharray='6.8 2.3'/><g fill='#4b4b4b'><circle cx='216.3' cy='326.3' r='4.1'/><circle cx='223.0' cy='328.3' r='4.1'/><circle cx='226.0' cy='329.6' r='4.1'/><circle cx='231.4' cy='331.5' r='4.1'/><circle cx='235.4' cy='332.3' r='4.1'/><circle cx='246.5' cy='335.4' r='4.1'/><circle cx='234.0' cy='360.5' r='4.1'/><circle cx='238.7' cy='360.7' r='4.1'/><circle cx='244.0' cy='361.4' r='4.1'/><circle cx='248.7' cy='361.4' r='4.1'/><circle cx='254.0' cy='362.3' r='4.1'/><circle cx='262.0' cy='363.4' r='4.1'/><circle cx='266.0' cy='363.4' r='4.1'/><circle cx='280.4' cy='365.4' r='4.1'/><circle cx='303.4' cy='368.3' r='4.1'/><circle cx='195.3' cy='374.5' r='4.1'/><circle cx='197.6' cy='374.5' r='4.1'/><circle cx='213.4' cy='373.3' r='4.1'/><circle cx='221.4' cy='373.4' r='4.1'/><circle cx='263.4' cy='372.5' r='4.1'/><circle cx='271.4' cy='371.4' r='4.1'/><circle cx='291.4' cy='371.4' r='4.1'/><circle cx='366.2' cy='376.2' r='4.1'/><circle cx='428.5' cy='384.3' r='4.1'/><circle cx='364.8' cy='443.5' r='4.1'/><circle cx='363.0' cy='443.5' r='4.1'/><circle cx='467.5' cy='389.2' r='4.1'/><circle cx='455.3' cy='399.4' r='4.1'/><circle cx='461.5' cy='400.8' r='4.1'/><circle cx='464.4' cy='401.8' r='4.1'/><circle cx='467.2' cy='402.7' r='4.1'/><circle cx='472.7' cy='404.4' r='4.1'/><circle cx='497.3' cy='393.4' r='4.1'/><circle cx='496.3' cy='399.4' r='4.1'/><circle cx='510.4' cy='394.4' r='4.1'/><circle cx='529.6' cy='397.2' r='4.1'/><circle cx='545.3' cy='399.4' r='4.1'/><circle cx='506.6' cy='415.4' r='4.1'/><circle cx='511.2' cy='416.3' r='4.1'/><circle cx='528.4' cy='422.3' r='4.1'/><circle cx='539.6' cy='425.2' r='4.1'/><circle cx='556.4' cy='430.2' r='4.1'/><circle cx='562.2' cy='432.3' r='4.1'/><circle cx='568.5' cy='434.2' r='4.1'/><circle cx='486.3' cy='447.4' r='4.1'/><circle cx='393.4' cy='303.6' r='4.1'/><circle cx='395.8' cy='304.2' r='4.1'/><circle cx='398.1' cy='304.9' r='4.1'/><circle cx='400.5' cy='305.5' r='4.1'/><circle cx='402.9' cy='306.2' r='4.1'/><circle cx='405.2' cy='306.8' r='4.1'/><circle cx='407.6' cy='307.5' r='4.1'/><circle cx='410.0' cy='308.1' r='4.1'/><circle cx='412.3' cy='308.8' r='4.1'/><circle cx='414.7' cy='309.4' r='4.1'/></g><g fill='#4b4b4b' stroke='#ee8a1f' stroke-width='1.3'><circle cx='409.2' cy='325.0' r='3.5'/><circle cx='407.2' cy='330.2' r='3.5'/><circle cx='405.3' cy='335.4' r='3.5'/><circle cx='403.3' cy='340.7' r='3.5'/><circle cx='401.4' cy='345.9' r='3.5'/><circle cx='399.4' cy='351.1' r='3.5'/><circle cx='397.5' cy='356.4' r='3.5'/><circle cx='395.6' cy='361.6' r='3.5'/><circle cx='393.6' cy='366.8' r='3.5'/><circle cx='391.6' cy='372.0' r='3.5'/><circle cx='389.7' cy='377.2' r='3.5'/><circle cx='387.8' cy='382.5' r='3.5'/><circle cx='385.8' cy='387.7' r='3.5'/><circle cx='383.9' cy='392.9' r='3.5'/><circle cx='381.9' cy='398.2' r='3.5'/><circle cx='379.9' cy='403.4' r='3.5'/><circle cx='378.0' cy='408.6' r='3.5'/></g><path d='M388.6 363.6 L396.2 371.8 M396 364 L389 371.6' stroke='#0a78e8' stroke-width='1.3' fill='none'/><g font-family='"Liberation Sans", sans-serif' font-size='16' fill='#111'><text x='390' y='141.5' text-anchor='middle'>0°</text><text x='560' y='212.5' text-anchor='middle'>45°</text><text x='217.4' y='212.5' text-anchor='middle'>315°</text><text x='147' y='383.5' text-anchor='middle'>270°</text><text x='217.4' y='555.5' text-anchor='middle'>225°</text><text x='561' y='555.5' text-anchor='middle'>135°</text><text x='390' y='626.6' text-anchor='middle'>180°</text></g></svg>
<div class='t' style='left:669px;top:90px;font-size:14px;color:#111;letter-spacing:-0.06px'>Longford_Base 127</div>
<div class='a' style='left:646px;top:111px;width:168px;height:26px;border:1px solid #d4d4d4;border-radius:3px;background:#fff'></div>
<div class='a' style='left:651px;top:117px;width:16px;height:13px;background:#4b4b4b'></div>
<div class='t' style='left:669px;top:115px;font-size:14px;color:#111'>&lt;Empty&gt;: 127</div>
<div class='a' style='left:839px;top:81px;width:420px;height:680px;border:1px solid #b5b5b5;background:#fafafa'></div>
<div class='t b' style='left:874px;top:90px;font-size:12px;letter-spacing:-0.3px'>Selection_3</div>
<div class='t b' style='left:848px;top:116px;font-size:12px;letter-spacing:-0.3px'>Categories:</div>
<div class='a' style='left:856px;top:140px;width:381px;height:80px;border:1px solid #b5b5b5;border-top:none;background:#fff'></div>
<div class='a' style='left:856px;top:140px;width:381px;height:29px;background:#424041'></div>
<div class='a' style='left:857px;top:169px;width:379px;height:28px;background:#eeeeee'></div>
<div class='a' style='left:892px;top:140px;width:1px;height:29px;background:#e8e8e8'></div>
<div class='a' style='left:1186px;top:140px;width:1px;height:29px;background:#e8e8e8'></div>
<div class='a' style='left:892px;top:169px;width:1px;height:50px;background:#d6d6d6'></div>
<div class='a' style='left:1186px;top:169px;width:1px;height:50px;background:#d6d6d6'></div>
<div class='t' style='left:901px;top:147px;font-size:12px;color:#fff'>Name</div>
<div class='t' style='left:1195px;top:147px;font-size:12px;color:#fff;letter-spacing:-0.3px'>Colour</div>
<div class='a' style='left:912px;top:230px;width:76px;height:23px;border:1px solid #e2e2e2;background:#f2f2f2'></div>
<div class='t' style='left:928px;top:234px;font-size:12px;color:#b0b0b0'>Re<u>n</u>ame</div>
<div class='a' style='left:1141px;top:230px;width:96px;height:23px;border:1px solid #c4c4c4;background:#fafafa'></div>
<div class='t' style='left:1157px;top:234px;font-size:12px'><u>A</u>ssign to</div>
<svg style='left:1222px;top:238px' width='10' height='6'><path d='M1 0.5 L5 4.5 L9 0.5' fill='none' stroke='#8a8a8a' stroke-width='1'/></svg>
<div class='a' style='left:847px;top:286px;width:12px;height:12px;border:1px solid #265a7f;border-radius:6px;background:#fff'></div>
<div class='a' style='left:850px;top:289px;width:6px;height:6px;border-radius:3px;background:#265a7f'></div>
<div class='t' style='left:864px;top:284px;font-size:12px'>Fisher Mean</div>
<div class='a' style='left:944px;top:286px;width:12px;height:12px;border:1px solid #9a9a9a;border-radius:6px;background:#fff'></div>
<div class='t' style='left:961px;top:284px;font-size:12px'>Bingham analysis</div>
<div class='a' style='left:848px;top:312px;width:397px;height:82px;border:1px solid #c4c4c4;background:#fafafa'></div>
<div class='t' style='left:853px;top:316px;font-size:12px;letter-spacing:-0.08px'>Current Selection: 35</div>
<div class='t' style='left:853px;top:343px;font-size:12px;letter-spacing:-0.08px'><b>Mean:</b> Strike: 110.43 Azimuth: 200.43 Dip: 4.04</div>
<div class='t' style='left:853px;top:370px;font-size:12px;letter-spacing:-0.1px'>R-value (degree of clustering): 0.99</div>
<div class='a' style='left:1231px;top:316px;width:10px;height:51px;border-radius:5px;background:#8c8c8c'></div>
<div class='a' style='left:840px;top:402px;width:413px;height:1px;background:#c8c8c8'></div>
<div class='a' style='left:840px;top:408px;width:413px;height:1px;background:#c8c8c8'></div>
<div class='a' style='left:840px;top:403px;width:413px;height:5px;background:#fcfcfc'></div>
<div class='a' style='left:1036px;top:404px;width:21px;height:1px;background:repeating-linear-gradient(90deg,#555 0 1px,transparent 1px 2px)'></div><div class='a' style='left:1036px;top:406px;width:21px;height:1px;background:repeating-linear-gradient(90deg,#555 0 1px,transparent 1px 2px)'></div>
<div class='t b' style='left:873px;top:416px;font-size:12px;letter-spacing:-0.5px'>Longford_Base</div>
<div class='t' style='left:847px;top:454px;font-size:12px'><u>Q</u>uery filter:</div>
<div class='a' style='left:921px;top:450px;width:324px;height:24px;border:1px solid #c4c4c4;background:#fff'></div>
<div class='t' style='left:930px;top:454px;font-size:12px;font-style:italic;'>None</div>
<svg style='left:1230px;top:459px' width='10' height='6'><path d='M1 0.5 L5 4.5 L9 0.5' fill='none' stroke='#8a8a8a' stroke-width='1'/></svg>
<div class='t' style='left:847px;top:487px;font-size:12px'>Display filter</div>
<div class='a' style='left:921px;top:482px;width:324px;height:26px;border:1px solid #c4c4c4;background:#fff'></div>
<div class='t' style='left:930px;top:487px;font-size:12px;'>From Plot</div>
<svg style='left:1230px;top:492px' width='10' height='6'><path d='M1 0.5 L5 4.5 L9 0.5' fill='none' stroke='#8a8a8a' stroke-width='1'/></svg>
<div class='a' style='left:855px;top:522px;width:12px;height:12px;border:1px solid #e4e4e4;background:#fff'></div>
<div class='t' style='left:871px;top:520px;font-size:12px;color:#b0b0b0'>Enable filter:</div>
<div class='a' style='left:946px;top:516px;width:299px;height:24px;border:1px solid #e6e6e6;background:#f2f2f2'></div>
<div class='t' style='left:1048px;top:520px;font-size:12px;color:#b0b0b0'>Select Categories</div>
<div class='t' style='left:847px;top:552px;font-size:12px'>Pole si<u>z</u>e:</div>
<div class='a' style='left:921px;top:548px;width:324px;height:24px;border:1px solid #c4c4c4;background:#fff'></div>
<div class='t' style='left:930px;top:552px;font-size:12px;'>5.0</div>
<svg style='left:1231px;top:552px' width='10' height='16'><path d='M1.5 5 L5 1.5 L8.5 5 M1.5 11 L5 14.5 L8.5 11' fill='none' stroke='#8a8a8a' stroke-width='1'/></svg>
<div class='t' style='left:847px;top:584px;font-size:12px'>Line <u>w</u>idth:</div>
<div class='a' style='left:921px;top:580px;width:324px;height:24px;border:1px solid #c4c4c4;background:#fff'></div>
<div class='t' style='left:930px;top:584px;font-size:12px;'>2.0</div>
<svg style='left:1231px;top:584px' width='10' height='16'><path d='M1.5 5 L5 1.5 L8.5 5 M1.5 11 L5 14.5 L8.5 11' fill='none' stroke='#8a8a8a' stroke-width='1'/></svg>
<div class='a' style='left:5px;top:676px;width:829px;height:80px;border-left:1px solid #b5b5b5;border-right:1px solid #b5b5b5;background:#fff'></div>
<div class='a' style='left:6px;top:677px;width:827px;height:29px;background:#424041'></div>
<div class='a' style='left:6px;top:706px;width:827px;height:28px;background:#b3e5fc'></div>
<div class='a' style='left:41px;top:677px;width:1.3px;height:29px;background:#ececec'></div>
<div class='a' style='left:41px;top:706px;width:1.3px;height:43px;background:#d4d4d4'></div>
<div class='a' style='left:77px;top:677px;width:1.3px;height:29px;background:#ececec'></div>
<div class='a' style='left:77px;top:706px;width:1.3px;height:43px;background:#d4d4d4'></div>
<div class='a' style='left:310px;top:677px;width:1.3px;height:29px;background:#ececec'></div>
<div class='a' style='left:310px;top:706px;width:1.3px;height:43px;background:#d4d4d4'></div>
<div class='a' style='left:346px;top:677px;width:1.3px;height:29px;background:#ececec'></div>
<div class='a' style='left:346px;top:706px;width:1.3px;height:43px;background:#d4d4d4'></div>
<div class='a' style='left:382px;top:677px;width:1.3px;height:29px;background:#ececec'></div>
<div class='a' style='left:382px;top:706px;width:1.3px;height:43px;background:#d4d4d4'></div>
<div class='a' style='left:418px;top:677px;width:1.3px;height:29px;background:#ececec'></div>
<div class='a' style='left:418px;top:706px;width:1.3px;height:43px;background:#d4d4d4'></div>
<div class='a' style='left:454px;top:677px;width:1.3px;height:29px;background:#ececec'></div>
<div class='a' style='left:454px;top:706px;width:1.3px;height:43px;background:#d4d4d4'></div>
<div class='a' style='left:490px;top:677px;width:1.3px;height:29px;background:#ececec'></div>
<div class='a' style='left:490px;top:706px;width:1.3px;height:43px;background:#d4d4d4'></div>
<div class='a' style='left:723px;top:677px;width:1.3px;height:29px;background:#ececec'></div>
<div class='a' style='left:723px;top:706px;width:1.3px;height:43px;background:#d4d4d4'></div>
<div class='a' style='left:796px;top:677px;width:1.3px;height:29px;background:#ececec'></div>
<div class='a' style='left:796px;top:706px;width:1.3px;height:43px;background:#d4d4d4'></div>
<div class='t' style='left:86px;top:684px;font-size:12px;color:#fff;letter-spacing:-0.05px'>Structural Data</div>
<div class='t' style='left:499px;top:684px;font-size:12px;color:#fff;letter-spacing:-0.05px'>Colouring</div>
<div class='t' style='left:732px;top:684px;font-size:12px;color:#fff;letter-spacing:-0.1px'>Colourmap</div>
<div class='t' style='left:110px;top:712px;font-size:12px;letter-spacing:-0.12px'>Longford_Base <span style='color:#e8101a'>[Editing]</span></div>
<div class='t' style='left:523px;top:712px;font-size:12px;letter-spacing:-0.05px'>Selection_3</div>
<svg style='left:708px;top:717px' width='10' height='6'><path d='M1 0.5 L5 4.5 L9 0.5' fill='none' stroke='#8a8a8a' stroke-width='1'/></svg>
<svg style='left:808px;top:713px' width='14' height='14'><path d='M1.5 1.5 L12.5 12.5 M12.5 1.5 L1.5 12.5' stroke='#265a7f' stroke-width='1.2'/></svg>
<div class='a' style='left:6px;top:671px;width:827px;height:5px;background:#fdfdfd'></div>
<div class='a' style='left:410px;top:672px;width:21px;height:1px;background:repeating-linear-gradient(90deg,#555 0 1px,transparent 1px 2px)'></div><div class='a' style='left:410px;top:674px;width:21px;height:1px;background:repeating-linear-gradient(90deg,#555 0 1px,transparent 1px 2px)'></div>
<div class='a' style='left:1px;top:423px;width:1px;height:21px;background:repeating-linear-gradient(180deg,#555 0 1px,transparent 1px 2px)'></div><div class='a' style='left:3px;top:423px;width:1px;height:21px;background:repeating-linear-gradient(180deg,#555 0 1px,transparent 1px 2px)'></div>
<div class='a' style='left:835px;top:442px;width:1px;height:21px;background:repeating-linear-gradient(180deg,#555 0 1px,transparent 1px 2px)'></div><div class='a' style='left:837px;top:442px;width:1px;height:21px;background:repeating-linear-gradient(180deg,#555 0 1px,transparent 1px 2px)'></div>
<svg style='left:0;top:0' width='1256' height='749' viewBox='0 0 1256 749'><g transform='translate(0 0)'><circle cx='850.9' cy='94.6' r='1.9' fill='#2b7bb9'/><circle cx='850.9' cy='99' r='1.9' fill='#5aa784'/><circle cx='850.9' cy='103.4' r='1.9' fill='#ffc800'/><circle cx='856.4' cy='92.3' r='1.9' fill='#2b7bb9'/><circle cx='856.4' cy='96.7' r='1.9' fill='#2b7bb9'/><circle cx='856.4' cy='101.2' r='1.9' fill='#5aa784'/><circle cx='862' cy='94.6' r='1.9' fill='#5aa784'/><circle cx='863' cy='98.6' r='0.9' fill='#ffc800'/><circle cx='855.2' cy='105' r='0.9' fill='#ffc800'/><text x='855.8' y='106.8' font-family='"Liberation Sans", sans-serif' font-weight='bold' font-size='12.4' fill='#fafafa' stroke='#fafafa' stroke-width='1.8'>A</text><text x='855.8' y='106.8' font-family='"Liberation Sans", sans-serif' font-weight='bold' font-size='12.4' fill='#9a9a9a'>A</text></g><g fill='none' stroke='#7d7d7d' stroke-width='1'><path d='M867 154 Q875.1 145.5 883.3 154 Q875.1 162.5 867 154 Z'/><circle cx='875.1' cy='154' r='2.6'/><path d='M868 158.9 L882.6 148.1'/></g><g fill='none' stroke='#9a9a9a' stroke-width='1.3'><path d='M872.4 234.3 V250.3 Q872.4 252.5 874.6 252.5 H885.5 Q887.7 252.5 887.7 250.3 V234.3' fill='#fff'/><path d='M870.4 234.3 H889.4 M876.2 234.3 V232.6 Q876.2 231.4 877.4 231.4 H882.7 Q883.9 231.4 883.9 232.6 V234.3'/><path d='M876.5 238.2 V247.9 M880.05 238.2 V247.9 M883.6 238.2 V247.9'/></g><g transform='translate(0 0)' fill='#5bbcd8' stroke='#1f6f96' stroke-width='1.3'><ellipse cx='855.4' cy='420.8' rx='6.5' ry='3.5' transform='rotate(-24 855.4 420.8)'/><ellipse cx='856.2' cy='429.6' rx='6.8' ry='3.2' transform='rotate(-5 856.2 429.6)'/></g><path d='M15.7 691.1 Q24 680.7 32.3 691.1 Q24 701.5 15.7 691.1 Z' fill='#24587d'/><circle cx='24' cy='691.1' r='2.4' fill='none' stroke='#fff' stroke-width='0.95'/><path d='M15.7 719.9 Q24 709.5 32.3 719.9 Q24 730.3 15.7 719.9 Z' fill='#24587d'/><circle cx='24' cy='719.9' r='2.4' fill='none' stroke='#fff' stroke-width='0.95'/><path d='M52.6 727.2 L53 722.4 L62.6 712.6 Q63.6 711.8 64.6 712.8 L67.2 715.4 Q68 716.4 67.2 717.2 L57.4 727 Z' fill='#fff' stroke='#24587d' stroke-width='1.1' stroke-linejoin='round'/><path d='M61 714.4 L65.4 718.8' stroke='#24587d' stroke-width='1'/><circle cx='64.2' cy='724.2' r='4' fill='#e53935'/><path d='M62.5 722.5 L65.9 725.9 M65.9 722.5 L62.5 725.9' stroke='#fff' stroke-width='1.1'/><g transform='translate(-757.9 295.09999999999997)' fill='#5bbcd8' stroke='#1f6f96' stroke-width='1.3'><ellipse cx='855.4' cy='420.8' rx='6.5' ry='3.5' transform='rotate(-24 855.4 420.8)'/><ellipse cx='856.2' cy='429.6' rx='6.8' ry='3.2' transform='rotate(-5 856.2 429.6)'/></g><circle cx='329' cy='691.1' r='7.7' fill='#686868' stroke='#9a9a9a' stroke-width='1.1'/><g fill='none' stroke='#5aa784' stroke-width='1.4' opacity='1'><path d='M327.8 683.5 Q324.5 691.1 326.8 698.5'/><path d='M321.8 690.1 Q328 695.3000000000001 335.4 695.5'/></g><circle cx='365' cy='691.1' r='7.7' fill='#686868' stroke='#9a9a9a' stroke-width='1.1'/><g fill='none' stroke='#5aa784' stroke-width='1.4' opacity='0.75'><path d='M363.8 683.5 Q360.5 691.1 362.8 698.5'/><path d='M357.8 690.1 Q364 695.3000000000001 371.4 695.5'/></g><circle cx='365.3' cy='686.9' r='1.7' fill='#5aa784'/><circle cx='369.6' cy='691.8000000000001' r='1.7' fill='#5aa784'/><circle cx='401.1' cy='691.1' r='7.7' fill='#686868' stroke='#9a9a9a' stroke-width='1.1'/><g transform='rotate(-14 402.40000000000003 690.6)'><ellipse cx='402.40000000000003' cy='690.6' rx='3.8' ry='5.4' fill='#5aa784' opacity='0.7'/><ellipse cx='402.40000000000003' cy='690.6' rx='2.8' ry='4.2' fill='#7a7a7a' opacity='0.8'/><ellipse cx='402.40000000000003' cy='690.6' rx='1.9' ry='3' fill='#5aa784'/></g><path d='M433.2 683.4 L437.59999999999997 688.0 L433.2 692.4 L428.8 688.0 Z' fill='#5aa784'/><path d='M433.2 683.4 L437.59999999999997 688.0 L428.8 688.0 Z' fill='#fff'/><path d='M431.59999999999997 682.6 L433.8 684.6' stroke='#fff' stroke-width='0.9'/><path d='M437.4 689.8 L438.8 691.4 L437.4 692.8 Z' fill='#5aa784'/><rect x='428.5' y='694.0' width='5.5' height='5' fill='#5aa784'/><rect x='434.0' y='694.0' width='5.5' height='5' fill='#7cc0a0'/><rect x='439.5' y='694.0' width='5.5' height='5' fill='#4f9373'/><rect x='465.1' y='682.2' width='15.8' height='17.4' rx='0.8' fill='#686868' stroke='#8a8a8a' stroke-width='1.1'/><rect x='467.40000000000003' y='684.9000000000001' width='3.6' height='3.2' fill='#e53935'/><circle cx='469.20000000000005' cy='691.0' r='1.8' fill='#5aa784'/><rect x='467.40000000000003' y='693.9000000000001' width='3.6' height='3.2' fill='#2b7bb9'/><path d='M472.3 685.6 H479.1 M472.3 687.6 H479.1 M472.3 694.6 H479.1 M472.3 696.6 H479.1' stroke='#a8a8a8' stroke-width='0.8'/><rect x='472.3' y='689.4000000000001' width='6.8' height='3.2' fill='#858585'/><rect x='353.6' y='708.7' width='22.8' height='22.6' fill='#bce7fb' stroke='#12a0f0' stroke-width='1.3'/><rect x='461.6' y='708.7' width='22.8' height='22.6' fill='#bce7fb' stroke='#12a0f0' stroke-width='1.3'/><circle cx='329' cy='719.9' r='7.7' fill='#c8ecfb' stroke='#8a8a8a' stroke-width='1.1'/><g fill='none' stroke='#4f9e7a' stroke-width='1.4' opacity='1'><path d='M327.8 712.3 Q324.5 719.9 326.8 727.3'/><path d='M321.8 718.9 Q328 724.1 335.4 724.3'/></g><circle cx='365' cy='719.9' r='7.7' fill='#c8ecfb' stroke='#8a8a8a' stroke-width='1.1'/><g fill='none' stroke='#4f9e7a' stroke-width='1.4' opacity='0.75'><path d='M363.8 712.3 Q360.5 719.9 362.8 727.3'/><path d='M357.8 718.9 Q364 724.1 371.4 724.3'/></g><circle cx='365.3' cy='715.6999999999999' r='1.7' fill='#4f9e7a'/><circle cx='369.6' cy='720.6' r='1.7' fill='#4f9e7a'/><circle cx='401.1' cy='719.9' r='7.7' fill='#c8ecfb' stroke='#8a8a8a' stroke-width='1.1'/><g transform='rotate(-14 402.40000000000003 719.4)'><ellipse cx='402.40000000000003' cy='719.4' rx='3.8' ry='5.4' fill='#4f9e7a' opacity='0.7'/><ellipse cx='402.40000000000003' cy='719.4' rx='2.8' ry='4.2' fill='#8fb3a6' opacity='0.8'/><ellipse cx='402.40000000000003' cy='719.4' rx='1.9' ry='3' fill='#4f9e7a'/></g><path d='M433.2 712.1999999999999 L437.59999999999997 716.8 L433.2 721.1999999999999 L428.8 716.8 Z' fill='#b0b0b0'/><path d='M433.2 712.1999999999999 L437.59999999999997 716.8 L428.8 716.8 Z' fill='#fff'/><path d='M431.59999999999997 711.4 L433.8 713.4' stroke='#b0b0b0' stroke-width='0.9'/><path d='M437.4 718.5999999999999 L438.8 720.1999999999999 L437.4 721.5999999999999 Z' fill='#b0b0b0'/><rect x='428.5' y='722.8' width='5.5' height='5' fill='#b4b4b4'/><rect x='434.0' y='722.8' width='5.5' height='5' fill='#c0c0c0'/><rect x='439.5' y='722.8' width='5.5' height='5' fill='#b4c4cc'/><rect x='465.1' y='711.0' width='15.8' height='17.4' rx='0.8' fill='#c8ecfb' stroke='#8a8a8a' stroke-width='1.1'/><rect x='467.40000000000003' y='713.7' width='3.6' height='3.2' fill='#e53935'/><circle cx='469.20000000000005' cy='719.8' r='1.8' fill='#5aa784'/><rect x='467.40000000000003' y='722.7' width='3.6' height='3.2' fill='#2b7bb9'/><path d='M472.3 714.4 H479.1 M472.3 716.4 H479.1 M472.3 723.4 H479.1 M472.3 725.4 H479.1' stroke='#8a7f7c' stroke-width='0.8'/><rect x='472.3' y='718.2' width='6.8' height='3.2' fill='#a9c4d2'/><g transform='translate(-346.1 621)'><circle cx='850.9' cy='94.6' r='1.9' fill='#2b7bb9'/><circle cx='850.9' cy='99' r='1.9' fill='#5aa784'/><circle cx='850.9' cy='103.4' r='1.9' fill='#ffc800'/><circle cx='856.4' cy='92.3' r='1.9' fill='#2b7bb9'/><circle cx='856.4' cy='96.7' r='1.9' fill='#2b7bb9'/><circle cx='856.4' cy='101.2' r='1.9' fill='#5aa784'/><circle cx='862' cy='94.6' r='1.9' fill='#5aa784'/><circle cx='863' cy='98.6' r='0.9' fill='#ffc800'/><circle cx='855.2' cy='105' r='0.9' fill='#ffc800'/><text x='855.8' y='106.8' font-family='"Liberation Sans", sans-serif' font-weight='bold' font-size='12.4' fill='#b3e5fc' stroke='#b3e5fc' stroke-width='1.8'>A</text><text x='855.8' y='106.8' font-family='"Liberation Sans", sans-serif' font-weight='bold' font-size='12.4' fill='#9a9a9a'>A</text></g></svg>
<div class='a' style='left:545px;top:255px;width:304px;height:154px;border-radius:8px;box-shadow:0 18px 46px 5px rgba(0,0,0,0.40),0 0 0 1px rgba(60,60,60,0.55);background:#f5f5f5;overflow:hidden'><div class='a' style='left:0;top:0;width:304px;height:31px;background:#4a4947'></div></div>
<div class='t' style='left:575px;top:263px;font-size:12.5px;color:#fff;letter-spacing:-0.28px'>Assign to new category</div>
<svg style='left:828px;top:264px' width='12' height='12'><path d='M1 1 L11 11 M11 1 L1 11' stroke='#fff' stroke-width='1'/></svg>
<div class='t' style='left:565px;top:314px;font-size:12px'><u>N</u>ame:</div>
<div class='a' style='left:608px;top:310px;width:189px;height:24px;border:1px solid #265a7f;background:#fff;outline:0'></div>
<div class='t' style='left:617px;top:314px;font-size:12px'>cat1</div>
<div class='a' style='left:640px;top:315px;width:1px;height:14px;background:#222'></div>
<div class='a' style='left:805px;top:310px;width:24px;height:24px;border:1px solid #c9c9c9;background:#ff69b4'></div>
<div class='a' style='left:585px;top:358px;width:112px;height:31px;border:1px solid #265a7f;background:#f5f5f5'></div>
<div class='t' style='left:622px;top:366px;font-size:12px;color:#265a7f'><u>C</u>ancel</div>
<div class='a' style='left:717px;top:358px;width:112px;height:31px;background:#265a7f'></div>
<div class='t' style='left:765px;top:366px;font-size:12px;color:#fff'><u>O</u>K</div>
<svg style='left:0;top:0' width='1256' height='749' viewBox='0 0 1256 749'><circle cx='561' cy='270.1' r='7.9' fill='#1f1f23'/><path d='M555.4 275.7 A7.9 7.9 0 0 1 566.6 264.5 Z' fill='#707070'/><path d='M557.1 272.2 L565.1 267 M558.9 267.2 L563.4 272' stroke='#fff' stroke-width='0.9'/><g fill='#fff'><circle cx='558.9' cy='267.2' r='1.3'/><circle cx='565.1' cy='267' r='1.2'/><circle cx='557.1' cy='272.2' r='1.7'/><circle cx='563.4' cy='272' r='1.3'/></g></svg>
<svg style='left:0;top:0' width='1256' height='749' viewBox='0 0 1256 749'><polygon points='1136.2,245.4 1138.9,257.1 872.3,319.6 873.7,331.6 832,321.2 865.4,294.8 867.7,306.3' fill='#f26c22'/></svg>
<div class='a' style='left:1253px;top:0;width:1px;height:749px;background:#b0b0b0'></div><div class='a' style='left:1254px;top:0;width:2px;height:749px;background:#ededed'></div>
</body></html>
